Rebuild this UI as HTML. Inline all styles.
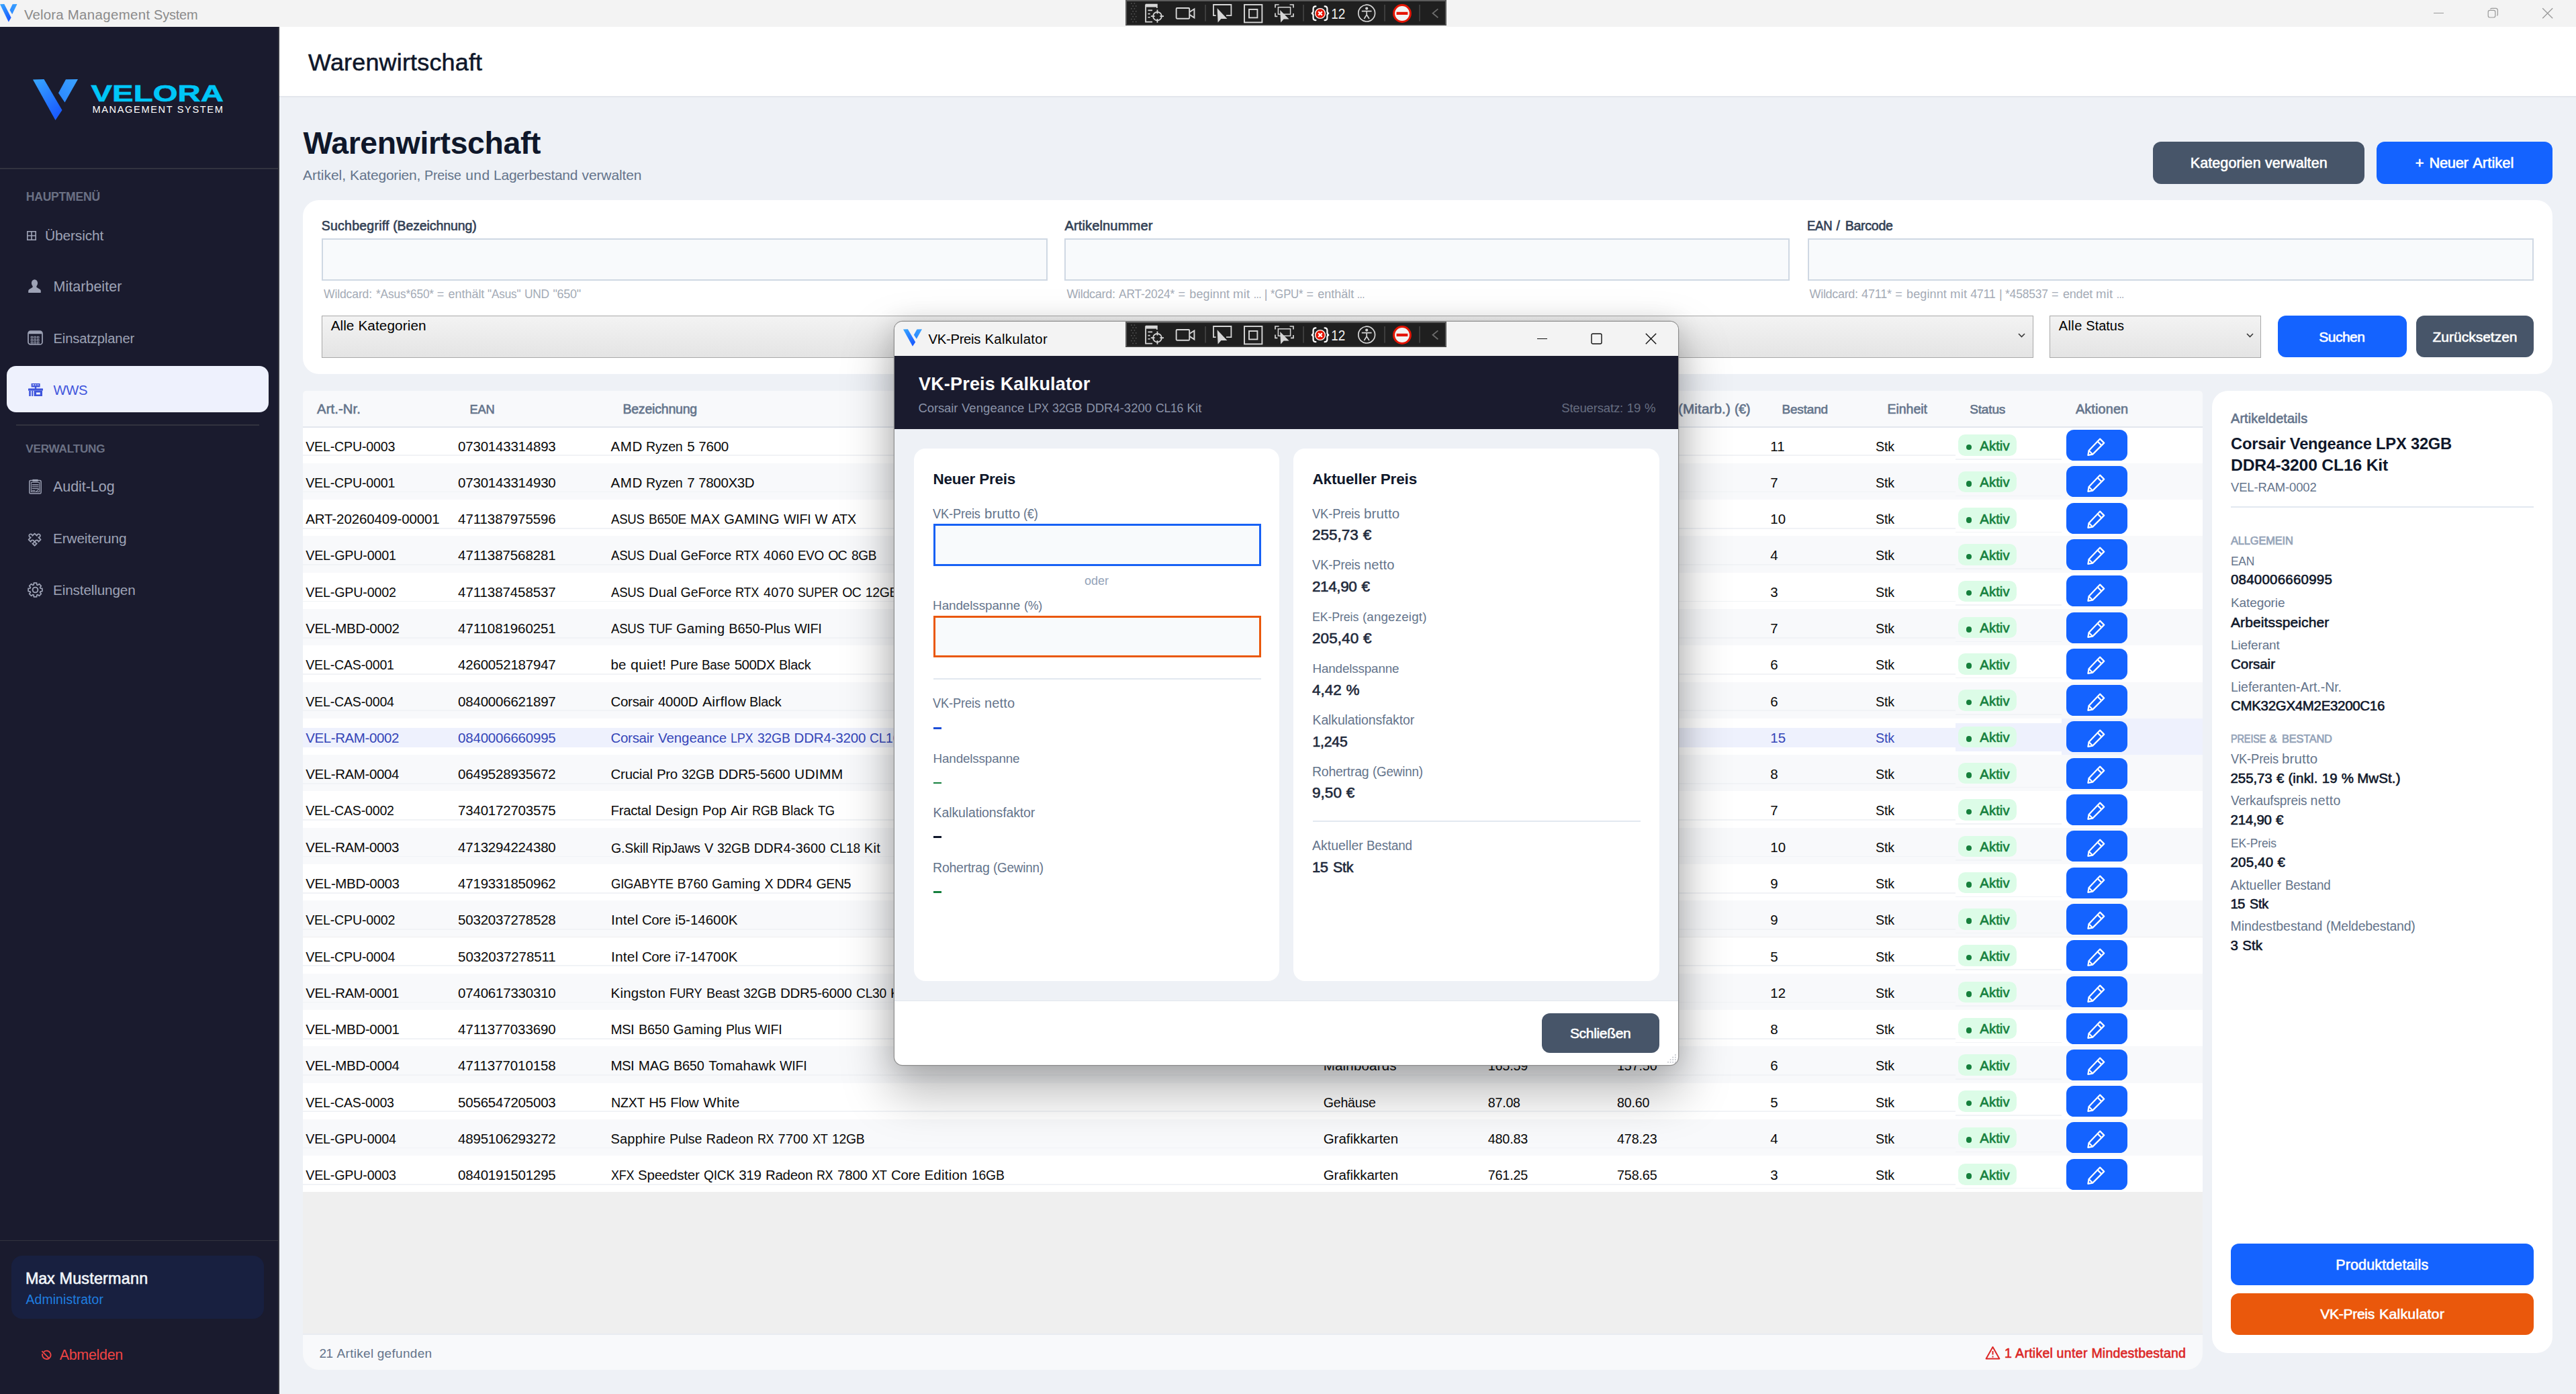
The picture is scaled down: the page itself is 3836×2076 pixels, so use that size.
<!DOCTYPE html><html lang="de"><head><meta charset="utf-8"><title>Velora Management System</title><style>
html,body{margin:0;padding:0}
body{width:3836px;height:2076px;position:relative;overflow:hidden;background:#eef1f6;
font-family:"Liberation Sans",sans-serif;}
.t{position:absolute;white-space:pre;line-height:1;}
.a{position:absolute;}
</style></head><body><svg width="0" height="0" style="position:absolute"><defs>
<linearGradient id="vg" x1="0" y1="0" x2="0.6" y2="1"><stop offset="0" stop-color="#38a8ff"/><stop offset="1" stop-color="#1a5cff"/></linearGradient>
<linearGradient id="vg2" x1="0" y1="1" x2="1" y2="0"><stop offset="0" stop-color="#2a86ff"/><stop offset="1" stop-color="#3aa2ff"/></linearGradient>
<symbol id="vlogo" viewBox="0 0 67 61"><path d="M0 0.5 L16.5 0 L43.5 46 L33.5 61 Z" fill="url(#vg)"/><path d="M49 0.3 L67 0 L47.5 34.5 L38 20.5 Z" fill="url(#vg2)"/></symbol>
<symbol id="pencil" viewBox="0 0 27 27"><g fill="none" stroke="#fff" stroke-width="2.2" stroke-linejoin="round" stroke-linecap="round"><path d="M19.2 1.6 L25.2 7.6 L8.2 24.6 L1.4 25.8 L2.6 19 Z"/><path d="M15.6 5.4 L21.4 11.2"/><path d="M2.8 19.2 L7.8 24.2"/></g></symbol>
</defs></svg><div class="a" style="left:0.0px;top:0.0px;width:3836.0px;height:40.0px;background:#f3f3f3;"></div><svg class="a" style="left:0;top:6px" width="25.6" height="26.8" viewBox="0 0 67 61" preserveAspectRatio="none"><use href="#vlogo" width="67" height="61"/></svg><span class="t" style="left:35.9px;top:12.0px;font-size:20.44px;color:#8a8a8a;letter-spacing:0.165px;">Velora</span><span class="t" style="left:100.7px;top:12.0px;font-size:20.44px;color:#8a8a8a;letter-spacing:0.354px;">Management</span><span class="t" style="left:229.2px;top:12.0px;font-size:20.44px;color:#8a8a8a;letter-spacing:-0.204px;transform:scaleX(0.9789);transform-origin:0 0;">System</span><div class="a" style="left:3624.0px;top:18.8px;width:15.2px;height:1.2px;background:#9a9a9a;"></div><svg class="a" style="left:3704.2px;top:11.4px;" width="17" height="17" viewBox="0 0 17 17"><g fill="none" stroke="#9a9a9a" stroke-width="1.2"><rect x="1.2" y="4.4" width="10.6" height="10.6" rx="2.4"/><path d="M4.6 2.8 a2 2 0 0 1 1.8 -1.4 H12.6 a2.8 2.8 0 0 1 2.8 2.8 V10.4 a2 2 0 0 1 -1.2 1.8"/></g></svg><svg class="a" style="left:3785.0px;top:11.0px;" width="18" height="18" viewBox="0 0 18 18"><path d="M1.2 1.2 L16.2 16.2 M16.2 1.2 L1.2 16.2" stroke="#9a9a9a" stroke-width="1.3" fill="none"/></svg><div class="a" style="left:0.0px;top:40.0px;width:416.0px;height:2036.0px;background:#1a1b2e;"></div><div class="a" style="left:413.6px;top:40.0px;width:2.4px;height:2036.0px;background:#34353f;"></div><svg class="a" style="left:49.0px;top:117.8px;" width="67" height="61" viewBox="0 0 67 61"><use href="#vlogo" width="67" height="61"/></svg><svg class="a" style="left:133px;top:120px" width="204" height="54" viewBox="0 0 204 54"><text x="2.5" y="30.9" font-family="Liberation Sans" font-weight="700" font-size="35.5" fill="#00c6f7" stroke="#00c6f7" stroke-width="0.7" textLength="197.4" lengthAdjust="spacingAndGlyphs">VELORA</text><text x="4.4" y="47.8" font-family="Liberation Sans" font-size="14.6" fill="#ffffff" textLength="194.5" lengthAdjust="spacing">MANAGEMENT SYSTEM</text></svg><div class="a" style="left:0.0px;top:250.2px;width:414.0px;height:2.0px;background:#32333f;"></div><span class="t" style="left:38.7px;top:285.0px;font-size:17.56px;color:#6b7184;font-weight:700;letter-spacing:-0.201px;">HAUPTMENÜ</span><svg class="a" style="left:39.6px;top:344.0px;" width="14" height="14" viewBox="0 0 14 14"><g fill="none" stroke="#9ea3b6" stroke-width="1.6"><rect x="0.8" y="0.8" width="12.4" height="12.4"/><path d="M7 0.8V13.2M0.8 7H13.2"/></g></svg><span class="t" style="left:67.1px;top:341.0px;font-size:20.96px;color:#9ea3b6;letter-spacing:-0.162px;">Übersicht</span><svg class="a" style="left:42.2px;top:416.4px;" width="19" height="20" viewBox="0 0 19 20"><g fill="#9ea3b6"><ellipse cx="9.5" cy="5.6" rx="4.6" ry="5.4"/><path d="M6.6 9.5 h5.8 v2.2 l5.2 3.2 q1.2 0.8 1.2 2.4 V20 H0.2 v-2.7 q0 -1.6 1.2 -2.4 l5.2 -3.2 Z"/></g></svg><span class="t" style="left:79.5px;top:417.0px;font-size:21.5px;color:#9ea3b6;letter-spacing:0.024px;">Mitarbeiter</span><svg class="a" style="left:41.0px;top:492.4px;" width="23" height="22" viewBox="0 0 23 22"><rect x="1" y="1" width="21" height="20" rx="3.6" fill="none" stroke="#9ea3b6" stroke-width="1.7"/><path d="M1.4 5.2 a3.6 3.6 0 0 1 3.4 -4 h13.4 a3.6 3.6 0 0 1 3.4 4 Z" fill="#9ea3b6"/><rect x="5.2" y="9.2" width="2.6" height="2.4" fill="none" stroke="#9ea3b6" stroke-width="0.9"/><rect x="9.8" y="9.2" width="2.6" height="2.4" fill="none" stroke="#9ea3b6" stroke-width="0.9"/><rect x="14.4" y="9.2" width="2.6" height="2.4" fill="none" stroke="#9ea3b6" stroke-width="0.9"/><rect x="5.2" y="13.4" width="2.6" height="2.4" fill="none" stroke="#9ea3b6" stroke-width="0.9"/><rect x="9.8" y="13.4" width="2.6" height="2.4" fill="none" stroke="#9ea3b6" stroke-width="0.9"/><rect x="14.4" y="13.4" width="2.6" height="2.4" fill="none" stroke="#9ea3b6" stroke-width="0.9"/><rect x="5.2" y="17.6" width="2.6" height="2.4" fill="none" stroke="#9ea3b6" stroke-width="0.9"/><rect x="9.8" y="17.6" width="2.6" height="2.4" fill="none" stroke="#9ea3b6" stroke-width="0.9"/><rect x="14.4" y="17.6" width="2.6" height="2.4" fill="none" stroke="#9ea3b6" stroke-width="0.9"/></svg><span class="t" style="left:79.5px;top:494.0px;font-size:20.22px;color:#9ea3b6;letter-spacing:-0.143px;">Einsatzplaner</span><div class="a" style="left:10.0px;top:544.6px;width:390.2px;height:69.7px;background:#eef1fd;border-radius:14px;"></div><svg class="a" style="left:42.0px;top:571.0px;" width="22" height="19" viewBox="0 0 22 19"><g fill="#3f55dc"><rect x="4.6" y="0" width="13" height="5.6" rx="0.6"/><rect x="9.8" y="5" width="2.4" height="3.4"/><rect x="0" y="7.6" width="22" height="3.2" rx="0.6"/><rect x="1.2" y="11" width="2.6" height="8"/><rect x="5.2" y="11" width="2" height="8"/><path d="M8.6 11 H21 V19 H8.6 Z M12 13.4 V16.4 H17.8 V13.4 Z" fill-rule="evenodd"/></g><g fill="#eef1fd"><rect x="6.4" y="1.5" width="2.6" height="1.4"/><rect x="10.2" y="1.5" width="2" height="1.4"/><rect x="13.6" y="1.5" width="2" height="1.4"/></g></svg><span class="t" style="left:79.5px;top:571.0px;font-size:20.26px;color:#3f55dc;letter-spacing:-0.367px;">WWS</span><div class="a" style="left:24.0px;top:632.0px;width:361.6px;height:1.8px;background:#32333f;"></div><span class="t" style="left:38.3px;top:660.0px;font-size:17.21px;color:#6b7184;font-weight:700;letter-spacing:-0.260px;">VERWALTUNG</span><svg class="a" style="left:43.0px;top:713.2px;" width="19" height="23" viewBox="0 0 19 23"><g fill="none" stroke="#9ea3b6" stroke-width="1.5"><rect x="0.9" y="2.6" width="17.2" height="19.4" rx="1.6"/><rect x="3.4" y="5.4" width="12.2" height="14" stroke-width="1"/><path d="M5.4 0.9 h8.2 v3.4 h-8.2 Z" fill="#9ea3b6" stroke="none"/><path d="M4.6 9 h9.8 M4.6 11.8 h9.8 M4.6 14.6 h9.8" stroke-width="1.3"/><path d="M11 19 l3.8 -3.6 M4.4 17.6 h5" stroke-width="1.1"/></g></svg><span class="t" style="left:79.0px;top:715.0px;font-size:21.5px;color:#9ea3b6;letter-spacing:-0.056px;">Audit-Log</span><svg class="a" style="left:40.8px;top:790.6px;" width="24" height="24" viewBox="0 0 24 24"><g transform="translate(10.6 12.6) rotate(-45)"><path d="M-6.4 -6.4 H-1.7 A2.5 2.5 0 1 1 1.7 -6.4 H6.4 V-1.7 A2.5 2.5 0 1 1 6.4 1.7 V6.4 H1.7 A2.5 2.5 0 1 0 -1.7 6.4 H-6.4 V1.7 A2.5 2.5 0 1 0 -6.4 -1.7 Z" fill="none" stroke="#9ea3b6" stroke-width="1.7" stroke-linejoin="round"/></g></svg><span class="t" style="left:79.0px;top:792.0px;font-size:20.83px;color:#9ea3b6;letter-spacing:-0.164px;">Erweiterung</span><svg class="a" style="left:40.8px;top:867.0px;" width="23" height="23" viewBox="0 0 23 23"><path d="M9.14 3.86 L9.39 1.11 L13.61 1.11 L13.86 3.86 L15.23 4.42 L17.36 2.66 L20.34 5.64 L18.58 7.77 L19.14 9.14 L21.89 9.39 L21.89 13.61 L19.14 13.86 L18.58 15.23 L20.34 17.36 L17.36 20.34 L15.23 18.58 L13.86 19.14 L13.61 21.89 L9.39 21.89 L9.14 19.14 L7.77 18.58 L5.64 20.34 L2.66 17.36 L4.42 15.23 L3.86 13.86 L1.11 13.61 L1.11 9.39 L3.86 9.14 L4.42 7.77 L2.66 5.64 L5.64 2.66 L7.77 4.42 Z" fill="none" stroke="#9ea3b6" stroke-width="1.7" stroke-linejoin="round"/><circle cx="11.5" cy="11.5" r="3.9" fill="none" stroke="#9ea3b6" stroke-width="1.9"/></svg><span class="t" style="left:79.0px;top:869.0px;font-size:20.76px;color:#9ea3b6;letter-spacing:-0.149px;">Einstellungen</span><div class="a" style="left:0.0px;top:1846.6px;width:414.0px;height:1.8px;background:#32333f;"></div><div class="a" style="left:17.4px;top:1869.6px;width:375.6px;height:94.6px;background:#182040;border-radius:16px;"></div><span class="t" style="left:38.1px;top:1893.0px;font-size:23.38px;color:#f1f5f9;letter-spacing:-0.243px;-webkit-text-stroke:0.62px #f1f5f9;">Max</span><span class="t" style="left:88.5px;top:1893.0px;font-size:23.38px;color:#f1f5f9;letter-spacing:0.193px;-webkit-text-stroke:0.62px #f1f5f9;">Mustermann</span><span class="t" style="left:38.6px;top:1926.0px;font-size:19.38px;color:#1f7fe0;letter-spacing:0.104px;">Administrator</span><svg class="a" style="left:60.5px;top:2009.5px;" width="16" height="16" viewBox="0 0 16 16"><g fill="none" stroke="#ef4444" stroke-width="1.9"><path d="M4.2 3.2 A6.2 6.2 0 1 1 2.4 6"/><path d="M1.4 2.2 L11.6 12.4"/></g></svg><span class="t" style="left:88.7px;top:2008.0px;font-size:21.5px;color:#ef4444;letter-spacing:-0.318px;">Abmelden</span><div class="a" style="left:416.0px;top:40.0px;width:3420.0px;height:102.8px;background:#ffffff;"></div><div class="a" style="left:416.0px;top:142.6px;width:3420.0px;height:2.0px;background:#e3e6ec;"></div><span class="t" style="left:459.1px;top:75.0px;font-size:35.96px;color:#0f172a;letter-spacing:0.185px;-webkit-text-stroke:0.55px #0f172a;">Warenwirtschaft</span><span class="t" style="left:451.6px;top:190.0px;font-size:46.39px;color:#0f172a;font-weight:700;letter-spacing:-0.375px;">Warenwirtschaft</span><span class="t" style="left:451.1px;top:250.0px;font-size:21px;color:#64748b;letter-spacing:-0.041px;">Artikel,</span><span class="t" style="left:521.1px;top:250.0px;font-size:21px;color:#64748b;letter-spacing:-0.216px;">Kategorien,</span><span class="t" style="left:632.4px;top:250.0px;font-size:21px;color:#64748b;letter-spacing:-0.179px;transform:scaleX(0.9347);transform-origin:0 0;">Preise</span><span class="t" style="left:693.3px;top:250.0px;font-size:21px;color:#64748b;letter-spacing:0.393px;">und</span><span class="t" style="left:735.1px;top:250.0px;font-size:21px;color:#64748b;letter-spacing:-0.283px;">Lagerbestand</span><span class="t" style="left:866.5px;top:250.0px;font-size:21px;color:#64748b;letter-spacing:-0.104px;">verwalten</span><div class="a" style="left:3206.4px;top:211.0px;width:314.4px;height:62.6px;background:#475569;border-radius:12px;"></div><span class="t" style="left:3261.7px;top:233.0px;font-size:21.53px;color:#ffffff;letter-spacing:0.093px;-webkit-text-stroke:0.62px #ffffff;">Kategorien</span><span class="t" style="left:3372.9px;top:233.0px;font-size:21.53px;color:#ffffff;letter-spacing:0.086px;-webkit-text-stroke:0.62px #ffffff;">verwalten</span><div class="a" style="left:3538.9px;top:211.0px;width:262.1px;height:62.6px;background:#1463ff;border-radius:12px;"></div><span class="t" style="left:3596.7px;top:232.0px;font-size:21.92px;color:#ffffff;-webkit-text-stroke:0.62px #ffffff;">+</span><span class="t" style="left:3617.4px;top:232.0px;font-size:21.92px;color:#ffffff;letter-spacing:-0.300px;-webkit-text-stroke:0.62px #ffffff;">Neuer</span><span class="t" style="left:3682.2px;top:232.0px;font-size:21.92px;color:#ffffff;letter-spacing:0.068px;-webkit-text-stroke:0.62px #ffffff;">Artikel</span><div class="a" style="left:451.0px;top:298.3px;width:3349.8px;height:258.6px;background:#ffffff;border-radius:24px;"></div><span class="t" style="left:478.8px;top:327.0px;font-size:19.5px;color:#334155;letter-spacing:0.234px;-webkit-text-stroke:0.62px #334155;">Suchbegriff</span><span class="t" style="left:585.2px;top:327.0px;font-size:19.5px;color:#334155;letter-spacing:-0.107px;-webkit-text-stroke:0.62px #334155;">(Bezeichnung)</span><span class="t" style="left:1585.4px;top:326.0px;font-size:20.12px;color:#334155;letter-spacing:0.115px;-webkit-text-stroke:0.62px #334155;">Artikelnummer</span><span class="t" style="left:2691.1px;top:327.0px;font-size:19.5px;color:#334155;letter-spacing:-0.301px;-webkit-text-stroke:0.62px #334155;transform:scaleX(0.9505);transform-origin:0 0;">EAN</span><span class="t" style="left:2734.4px;top:327.0px;font-size:19.5px;color:#334155;-webkit-text-stroke:0.62px #334155;">/</span><span class="t" style="left:2747.7px;top:327.0px;font-size:19.5px;color:#334155;letter-spacing:-0.232px;-webkit-text-stroke:0.62px #334155;">Barcode</span><div class="a" style="left:479.3px;top:355.2px;width:1081.0px;height:62.8px;background:#f8fafc;border:2px solid #cfd8e3;box-sizing:border-box;"></div><div class="a" style="left:1585.4px;top:355.2px;width:1080.1px;height:62.8px;background:#f8fafc;border:2px solid #cfd8e3;box-sizing:border-box;"></div><div class="a" style="left:2691.6px;top:355.2px;width:1081.4px;height:62.8px;background:#f8fafc;border:2px solid #cfd8e3;box-sizing:border-box;"></div><span class="t" style="left:482.4px;top:429.0px;font-size:18px;color:#a4abb6;letter-spacing:-0.141px;transform:scaleX(0.9760);transform-origin:0 0;">Wildcard:</span><span class="t" style="left:559.6px;top:429.0px;font-size:18px;color:#a4abb6;letter-spacing:-0.152px;transform:scaleX(0.9596);transform-origin:0 0;">*Asus*650*</span><span class="t" style="left:650.8px;top:429.0px;font-size:18px;color:#a4abb6;">=</span><span class="t" style="left:667.6px;top:429.0px;font-size:18px;color:#a4abb6;letter-spacing:-0.052px;">enthält</span><span class="t" style="left:726.4px;top:429.0px;font-size:18px;color:#a4abb6;letter-spacing:-0.158px;transform:scaleX(0.9531);transform-origin:0 0;">"Asus"</span><span class="t" style="left:781.1px;top:429.0px;font-size:18px;color:#a4abb6;letter-spacing:-0.293px;transform:scaleX(0.9673);transform-origin:0 0;">UND</span><span class="t" style="left:823.4px;top:429.0px;font-size:18px;color:#a4abb6;letter-spacing:-0.247px;">"650"</span><span class="t" style="left:1588.4px;top:429.0px;font-size:18px;color:#a4abb6;letter-spacing:-0.316px;">Wildcard:</span><span class="t" style="left:1666.0px;top:429.0px;font-size:18px;color:#a4abb6;letter-spacing:-0.165px;transform:scaleX(0.9634);transform-origin:0 0;">ART-2024*</span><span class="t" style="left:1754.4px;top:429.0px;font-size:18px;color:#a4abb6;">=</span><span class="t" style="left:1771.3px;top:429.0px;font-size:18px;color:#a4abb6;letter-spacing:0.123px;">beginnt</span><span class="t" style="left:1836.2px;top:429.0px;font-size:18px;color:#a4abb6;letter-spacing:0.180px;transform:scaleX(1.0313);transform-origin:0 0;">mit</span><span class="t" style="left:1866.5px;top:429.0px;font-size:18px;color:#a4abb6;letter-spacing:-0.113px;transform:scaleX(0.7547);transform-origin:0 0;">...</span><span class="t" style="left:1882.8px;top:429.0px;font-size:18px;color:#a4abb6;">|</span><span class="t" style="left:1891.8px;top:429.0px;font-size:18px;color:#a4abb6;letter-spacing:-0.199px;transform:scaleX(0.9285);transform-origin:0 0;">*GPU*</span><span class="t" style="left:1945.4px;top:429.0px;font-size:18px;color:#a4abb6;">=</span><span class="t" style="left:1962.3px;top:429.0px;font-size:18px;color:#a4abb6;letter-spacing:-0.006px;">enthält</span><span class="t" style="left:2021.4px;top:429.0px;font-size:18px;color:#a4abb6;letter-spacing:-0.113px;transform:scaleX(0.7547);transform-origin:0 0;">...</span><span class="t" style="left:2694.6px;top:429.0px;font-size:18px;color:#a4abb6;letter-spacing:-0.327px;">Wildcard:</span><span class="t" style="left:2772.1px;top:429.0px;font-size:18px;color:#a4abb6;letter-spacing:-0.180px;">4711*</span><span class="t" style="left:2822.2px;top:429.0px;font-size:18px;color:#a4abb6;">=</span><span class="t" style="left:2839.1px;top:429.0px;font-size:18px;color:#a4abb6;letter-spacing:0.111px;">beginnt</span><span class="t" style="left:2904.0px;top:429.0px;font-size:18px;color:#a4abb6;letter-spacing:0.180px;transform:scaleX(1.0300);transform-origin:0 0;">mit</span><span class="t" style="left:2934.2px;top:429.0px;font-size:18px;color:#a4abb6;letter-spacing:-0.354px;">4711</span><span class="t" style="left:2976.9px;top:429.0px;font-size:18px;color:#a4abb6;">|</span><span class="t" style="left:2986.0px;top:429.0px;font-size:18px;color:#a4abb6;letter-spacing:-0.168px;transform:scaleX(0.9683);transform-origin:0 0;">*458537</span><span class="t" style="left:3055.1px;top:429.0px;font-size:18px;color:#a4abb6;">=</span><span class="t" style="left:3071.9px;top:429.0px;font-size:18px;color:#a4abb6;letter-spacing:-0.167px;">endet</span><span class="t" style="left:3121.4px;top:429.0px;font-size:18px;color:#a4abb6;letter-spacing:0.180px;transform:scaleX(1.0300);transform-origin:0 0;">mit</span><span class="t" style="left:3151.7px;top:429.0px;font-size:18px;color:#a4abb6;letter-spacing:-0.113px;transform:scaleX(0.7538);transform-origin:0 0;">...</span><div class="a" style="left:479.3px;top:470.2px;width:2548.3px;height:62.6px;border:1.6px solid #a8a8a8;box-sizing:border-box;background:linear-gradient(#f3f3f3,#e4e4e4);"></div><div class="a" style="left:3052.2px;top:470.2px;width:314.9px;height:62.6px;border:1.6px solid #a8a8a8;box-sizing:border-box;background:linear-gradient(#f3f3f3,#e4e4e4);"></div><span class="t" style="left:492.7px;top:475.0px;font-size:20.76px;color:#000;">Alle</span><span class="t" style="left:533.4px;top:475.0px;font-size:20.76px;color:#000;letter-spacing:0.091px;">Kategorien</span><span class="t" style="left:3065.8px;top:475.0px;font-size:20px;color:#000;letter-spacing:0.372px;">Alle</span><span class="t" style="left:3106.3px;top:475.0px;font-size:20px;color:#000;letter-spacing:-0.008px;">Status</span><svg class="a" style="left:3005.0px;top:496.2px;" width="11" height="7" viewBox="0 0 11 7"><path d="M1 1 L5.5 5.6 L10 1" fill="none" stroke="#3a3a3a" stroke-width="1.6"/></svg><svg class="a" style="left:3344.5px;top:496.2px;" width="11" height="7" viewBox="0 0 11 7"><path d="M1 1 L5.5 5.6 L10 1" fill="none" stroke="#3a3a3a" stroke-width="1.6"/></svg><div class="a" style="left:3391.7px;top:470.1px;width:191.9px;height:62.3px;background:#1463ff;border-radius:12px;"></div><span class="t" style="left:3453.2px;top:491.0px;font-size:21px;color:#ffffff;letter-spacing:-0.487px;-webkit-text-stroke:0.62px #ffffff;">Suchen</span><div class="a" style="left:3598.2px;top:470.1px;width:174.8px;height:62.3px;background:#475569;border-radius:12px;"></div><span class="t" style="left:3622.5px;top:491.0px;font-size:21px;color:#ffffff;-webkit-text-stroke:0.62px #ffffff;">Zurücksetzen</span><div class="a" style="left:451.2px;top:581.8px;width:2828.4px;height:1458.4px;background:#efefef;border-radius:5px 5px 24px 24px;"></div><div class="a" style="left:451.2px;top:581.8px;width:2828.4px;height:54.0px;background:#f8f9fb;border-radius:5px 5px 0 0;"></div><div class="a" style="left:451.2px;top:635.0px;width:2828.4px;height:2.2px;background:#e3e7ee;"></div><span class="t" style="left:472.1px;top:599.0px;font-size:20.23px;color:#64748b;letter-spacing:0.096px;-webkit-text-stroke:0.62px #64748b;">Art.-Nr.</span><span class="t" style="left:699.6px;top:601.0px;font-size:18.26px;color:#64748b;letter-spacing:-0.266px;-webkit-text-stroke:0.62px #64748b;">EAN</span><span class="t" style="left:927.4px;top:600.0px;font-size:19.5px;color:#64748b;letter-spacing:-0.197px;-webkit-text-stroke:0.62px #64748b;">Bezeichnung</span><span class="t" style="left:1987.6px;top:600.0px;font-size:19.89px;color:#64748b;letter-spacing:0.113px;-webkit-text-stroke:0.62px #64748b;">Kategorie</span><span class="t" style="left:2232.1px;top:599.0px;font-size:20.08px;color:#64748b;letter-spacing:-0.402px;-webkit-text-stroke:0.62px #64748b;transform:scaleX(0.9340);transform-origin:0 0;">EK</span><span class="t" style="left:2263.3px;top:599.0px;font-size:20.08px;color:#64748b;letter-spacing:0.184px;-webkit-text-stroke:0.62px #64748b;transform:scaleX(1.0417);transform-origin:0 0;">(€)</span><span class="t" style="left:2468.5px;top:599.0px;font-size:20.06px;color:#64748b;letter-spacing:-0.401px;-webkit-text-stroke:0.62px #64748b;transform:scaleX(0.9401);transform-origin:0 0;">VK</span><span class="t" style="left:2499.3px;top:599.0px;font-size:20.06px;color:#64748b;letter-spacing:0.140px;-webkit-text-stroke:0.62px #64748b;transform:scaleX(1.0278);transform-origin:0 0;">(Mitarb.)</span><span class="t" style="left:2583.2px;top:599.0px;font-size:20.06px;color:#64748b;letter-spacing:-0.184px;-webkit-text-stroke:0.62px #64748b;transform:scaleX(0.9751);transform-origin:0 0;">(€)</span><span class="t" style="left:2653.4px;top:600.0px;font-size:19.03px;color:#64748b;letter-spacing:-0.164px;-webkit-text-stroke:0.62px #64748b;">Bestand</span><span class="t" style="left:2810.6px;top:600.0px;font-size:19.5px;color:#64748b;letter-spacing:-0.054px;-webkit-text-stroke:0.62px #64748b;">Einheit</span><span class="t" style="left:2933.2px;top:600.0px;font-size:19.05px;color:#64748b;letter-spacing:-0.151px;-webkit-text-stroke:0.62px #64748b;">Status</span><span class="t" style="left:3090.9px;top:600.0px;font-size:19.92px;color:#64748b;letter-spacing:0.119px;-webkit-text-stroke:0.62px #64748b;">Aktionen</span><div class="a" style="left:451.2px;top:637.2px;width:2828.4px;height:52.7px;background:#ffffff;"></div><div class="a" style="left:451.2px;top:677.4px;width:2460.8px;height:1.8px;background:#f1f3f6;"></div><div class="a" style="left:2912.0px;top:683.2px;width:158.0px;height:1.6px;background:#f1f3f6;"></div><span class="t" style="left:455.2px;top:656.0px;font-size:19.64px;color:#0a0a0a;letter-spacing:-0.178px;">VEL-CPU-0003</span><span class="t" style="left:682.1px;top:655.0px;font-size:20.5px;color:#0a0a0a;letter-spacing:-0.213px;">0730143314893</span><span class="t" style="left:909.5px;top:655.0px;font-size:20.5px;color:#0a0a0a;letter-spacing:0.632px;">AMD</span><span class="t" style="left:962.4px;top:655.0px;font-size:20.5px;color:#0a0a0a;letter-spacing:-0.218px;transform:scaleX(0.9566);transform-origin:0 0;">Ryzen</span><span class="t" style="left:1023.2px;top:655.0px;font-size:20.5px;color:#0a0a0a;">5</span><span class="t" style="left:1040.3px;top:655.0px;font-size:20.5px;color:#0a0a0a;letter-spacing:-0.209px;">7600</span><span class="t" style="left:2636.3px;top:655.0px;font-size:20.5px;color:#0a0a0a;">11</span><span class="t" style="left:2793.0px;top:656.0px;font-size:19.67px;color:#0a0a0a;letter-spacing:-0.203px;">Stk</span><div class="a" style="left:2916.1px;top:647.4px;width:86.6px;height:31.5px;background:#dcfce7;border-radius:10.5px;"></div><div class="a" style="left:2927.6px;top:661.7px;width:8.7px;height:8.7px;background:#16803c;border-radius:4.4px;"></div><span class="t" style="left:2948.3px;top:654.0px;font-size:20.24px;color:#15803d;letter-spacing:0.110px;-webkit-text-stroke:0.62px #15803d;">Aktiv</span><div class="a" style="left:3077.0px;top:640.1px;width:91.1px;height:46.0px;background:#1463ff;border-radius:11.5px;"></div><svg class="a" style="left:3108.2px;top:651.6px;" width="27" height="27" viewBox="0 0 27 27"><use href="#pencil" width="27" height="27"/></svg><div class="a" style="left:451.2px;top:689.9px;width:2828.4px;height:54.3px;background:#f8f9fb;"></div><div class="a" style="left:451.2px;top:731.7px;width:2460.8px;height:1.8px;background:#f1f3f6;"></div><div class="a" style="left:2912.0px;top:737.5px;width:158.0px;height:1.6px;background:#f1f3f6;"></div><span class="t" style="left:455.2px;top:710.0px;font-size:19.64px;color:#0a0a0a;letter-spacing:-0.178px;">VEL-CPU-0001</span><span class="t" style="left:682.1px;top:709.0px;font-size:20.5px;color:#0a0a0a;letter-spacing:-0.213px;">0730143314930</span><span class="t" style="left:909.5px;top:709.0px;font-size:20.5px;color:#0a0a0a;letter-spacing:0.632px;">AMD</span><span class="t" style="left:962.4px;top:709.0px;font-size:20.5px;color:#0a0a0a;letter-spacing:-0.218px;transform:scaleX(0.9566);transform-origin:0 0;">Ryzen</span><span class="t" style="left:1023.2px;top:709.0px;font-size:20.5px;color:#0a0a0a;">7</span><span class="t" style="left:1040.3px;top:709.0px;font-size:20.5px;color:#0a0a0a;letter-spacing:-0.371px;">7800X3D</span><span class="t" style="left:2636.3px;top:709.0px;font-size:20.5px;color:#0a0a0a;">7</span><span class="t" style="left:2793.0px;top:710.0px;font-size:19.67px;color:#0a0a0a;letter-spacing:-0.203px;">Stk</span><div class="a" style="left:2916.1px;top:701.7px;width:86.6px;height:31.5px;background:#dcfce7;border-radius:10.5px;"></div><div class="a" style="left:2927.6px;top:716.0px;width:8.7px;height:8.7px;background:#16803c;border-radius:4.4px;"></div><span class="t" style="left:2948.3px;top:708.0px;font-size:20.24px;color:#15803d;letter-spacing:0.110px;-webkit-text-stroke:0.62px #15803d;">Aktiv</span><div class="a" style="left:3077.0px;top:694.4px;width:91.1px;height:46.0px;background:#1463ff;border-radius:11.5px;"></div><svg class="a" style="left:3108.2px;top:705.9px;" width="27" height="27" viewBox="0 0 27 27"><use href="#pencil" width="27" height="27"/></svg><div class="a" style="left:451.2px;top:744.2px;width:2828.4px;height:54.3px;background:#ffffff;"></div><div class="a" style="left:451.2px;top:786.0px;width:2460.8px;height:1.8px;background:#f1f3f6;"></div><div class="a" style="left:2912.0px;top:791.8px;width:158.0px;height:1.6px;background:#f1f3f6;"></div><span class="t" style="left:455.2px;top:763.0px;font-size:20.5px;color:#0a0a0a;letter-spacing:-0.106px;">ART-20260409-00001</span><span class="t" style="left:682.1px;top:763.0px;font-size:20.5px;color:#0a0a0a;letter-spacing:-0.087px;">4711387975596</span><span class="t" style="left:909.5px;top:763.0px;font-size:20.04px;color:#0a0a0a;letter-spacing:-0.273px;transform:scaleX(0.9297);transform-origin:0 0;">ASUS</span><span class="t" style="left:965.5px;top:763.0px;font-size:20.04px;color:#0a0a0a;letter-spacing:-0.226px;transform:scaleX(0.9505);transform-origin:0 0;">B650E</span><span class="t" style="left:1027.9px;top:763.0px;font-size:20.04px;color:#0a0a0a;letter-spacing:0.457px;">MAX</span><span class="t" style="left:1078.3px;top:763.0px;font-size:20.04px;color:#0a0a0a;letter-spacing:0.201px;">GAMING</span><span class="t" style="left:1166.6px;top:763.0px;font-size:20.04px;color:#0a0a0a;letter-spacing:-0.211px;transform:scaleX(0.9776);transform-origin:0 0;">WIFI</span><span class="t" style="left:1213.4px;top:763.0px;font-size:20.04px;color:#0a0a0a;">W</span><span class="t" style="left:1238.7px;top:763.0px;font-size:20.04px;color:#0a0a0a;letter-spacing:-0.502px;">ATX</span><span class="t" style="left:2636.3px;top:763.0px;font-size:20.5px;color:#0a0a0a;">10</span><span class="t" style="left:2793.0px;top:764.0px;font-size:19.67px;color:#0a0a0a;letter-spacing:-0.203px;">Stk</span><div class="a" style="left:2916.1px;top:756.0px;width:86.6px;height:31.5px;background:#dcfce7;border-radius:10.5px;"></div><div class="a" style="left:2927.6px;top:770.3px;width:8.7px;height:8.7px;background:#16803c;border-radius:4.4px;"></div><span class="t" style="left:2948.3px;top:763.0px;font-size:20.24px;color:#15803d;letter-spacing:0.110px;-webkit-text-stroke:0.62px #15803d;">Aktiv</span><div class="a" style="left:3077.0px;top:748.7px;width:91.1px;height:46.0px;background:#1463ff;border-radius:11.5px;"></div><svg class="a" style="left:3108.2px;top:760.2px;" width="27" height="27" viewBox="0 0 27 27"><use href="#pencil" width="27" height="27"/></svg><div class="a" style="left:451.2px;top:798.4px;width:2828.4px;height:54.3px;background:#f8f9fb;"></div><div class="a" style="left:451.2px;top:840.2px;width:2460.8px;height:1.8px;background:#f1f3f6;"></div><div class="a" style="left:2912.0px;top:846.0px;width:158.0px;height:1.6px;background:#f1f3f6;"></div><span class="t" style="left:455.2px;top:818.0px;font-size:19.69px;color:#0a0a0a;letter-spacing:-0.188px;">VEL-GPU-0001</span><span class="t" style="left:682.1px;top:817.0px;font-size:20.5px;color:#0a0a0a;letter-spacing:-0.087px;">4711387568281</span><span class="t" style="left:909.5px;top:818.0px;font-size:19.67px;color:#0a0a0a;letter-spacing:-0.268px;transform:scaleX(0.9476);transform-origin:0 0;">ASUS</span><span class="t" style="left:965.5px;top:818.0px;font-size:19.67px;color:#0a0a0a;letter-spacing:0.202px;transform:scaleX(1.0247);transform-origin:0 0;">Dual</span><span class="t" style="left:1013.6px;top:818.0px;font-size:19.67px;color:#0a0a0a;letter-spacing:-0.136px;">GeForce</span><span class="t" style="left:1095.3px;top:818.0px;font-size:19.67px;color:#0a0a0a;letter-spacing:-0.292px;transform:scaleX(0.9250);transform-origin:0 0;">RTX</span><span class="t" style="left:1136.9px;top:818.0px;font-size:19.67px;color:#0a0a0a;letter-spacing:0.416px;">4060</span><span class="t" style="left:1187.9px;top:818.0px;font-size:19.67px;color:#0a0a0a;letter-spacing:-0.311px;transform:scaleX(0.9586);transform-origin:0 0;">EVO</span><span class="t" style="left:1233.2px;top:818.0px;font-size:19.67px;color:#0a0a0a;letter-spacing:-0.950px;">OC</span><span class="t" style="left:1267.8px;top:818.0px;font-size:19.67px;color:#0a0a0a;letter-spacing:-0.295px;transform:scaleX(0.9673);transform-origin:0 0;">8GB</span><span class="t" style="left:2636.3px;top:817.0px;font-size:20.5px;color:#0a0a0a;">4</span><span class="t" style="left:2793.0px;top:818.0px;font-size:19.67px;color:#0a0a0a;letter-spacing:-0.203px;">Stk</span><div class="a" style="left:2916.1px;top:810.2px;width:86.6px;height:31.5px;background:#dcfce7;border-radius:10.5px;"></div><div class="a" style="left:2927.6px;top:824.5px;width:8.7px;height:8.7px;background:#16803c;border-radius:4.4px;"></div><span class="t" style="left:2948.3px;top:817.0px;font-size:20.24px;color:#15803d;letter-spacing:0.110px;-webkit-text-stroke:0.62px #15803d;">Aktiv</span><div class="a" style="left:3077.0px;top:802.9px;width:91.1px;height:46.0px;background:#1463ff;border-radius:11.5px;"></div><svg class="a" style="left:3108.2px;top:814.4px;" width="27" height="27" viewBox="0 0 27 27"><use href="#pencil" width="27" height="27"/></svg><div class="a" style="left:451.2px;top:852.7px;width:2828.4px;height:54.3px;background:#ffffff;"></div><div class="a" style="left:451.2px;top:894.5px;width:2460.8px;height:1.8px;background:#f1f3f6;"></div><div class="a" style="left:2912.0px;top:900.3px;width:158.0px;height:1.6px;background:#f1f3f6;"></div><span class="t" style="left:455.2px;top:873.0px;font-size:19.69px;color:#0a0a0a;letter-spacing:-0.188px;">VEL-GPU-0002</span><span class="t" style="left:682.1px;top:872.0px;font-size:20.5px;color:#0a0a0a;letter-spacing:-0.087px;">4711387458537</span><span class="t" style="left:909.5px;top:873.0px;font-size:19.48px;color:#0a0a0a;letter-spacing:-0.265px;transform:scaleX(0.9565);transform-origin:0 0;">ASUS</span><span class="t" style="left:965.5px;top:873.0px;font-size:19.48px;color:#0a0a0a;letter-spacing:0.200px;transform:scaleX(1.0347);transform-origin:0 0;">Dual</span><span class="t" style="left:1013.6px;top:873.0px;font-size:19.48px;color:#0a0a0a;letter-spacing:-0.017px;">GeForce</span><span class="t" style="left:1095.3px;top:873.0px;font-size:19.48px;color:#0a0a0a;letter-spacing:-0.289px;transform:scaleX(0.9340);transform-origin:0 0;">RTX</span><span class="t" style="left:1136.9px;top:873.0px;font-size:19.48px;color:#0a0a0a;letter-spacing:0.217px;transform:scaleX(1.0232);transform-origin:0 0;">4070</span><span class="t" style="left:1187.9px;top:873.0px;font-size:19.48px;color:#0a0a0a;letter-spacing:-0.252px;transform:scaleX(0.9116);transform-origin:0 0;">SUPER</span><span class="t" style="left:1254.2px;top:873.0px;font-size:19.48px;color:#0a0a0a;letter-spacing:-0.669px;">OC</span><span class="t" style="left:1288.8px;top:873.0px;font-size:19.48px;color:#0a0a0a;letter-spacing:-0.330px;">12GB</span><span class="t" style="left:2636.3px;top:872.0px;font-size:20.5px;color:#0a0a0a;">3</span><span class="t" style="left:2793.0px;top:873.0px;font-size:19.67px;color:#0a0a0a;letter-spacing:-0.203px;">Stk</span><div class="a" style="left:2916.1px;top:864.5px;width:86.6px;height:31.5px;background:#dcfce7;border-radius:10.5px;"></div><div class="a" style="left:2927.6px;top:878.8px;width:8.7px;height:8.7px;background:#16803c;border-radius:4.4px;"></div><span class="t" style="left:2948.3px;top:871.0px;font-size:20.24px;color:#15803d;letter-spacing:0.110px;-webkit-text-stroke:0.62px #15803d;">Aktiv</span><div class="a" style="left:3077.0px;top:857.2px;width:91.1px;height:46.0px;background:#1463ff;border-radius:11.5px;"></div><svg class="a" style="left:3108.2px;top:868.7px;" width="27" height="27" viewBox="0 0 27 27"><use href="#pencil" width="27" height="27"/></svg><div class="a" style="left:451.2px;top:907.0px;width:2828.4px;height:54.3px;background:#f8f9fb;"></div><div class="a" style="left:451.2px;top:948.8px;width:2460.8px;height:1.8px;background:#f1f3f6;"></div><div class="a" style="left:2912.0px;top:954.6px;width:158.0px;height:1.6px;background:#f1f3f6;"></div><span class="t" style="left:455.2px;top:926.0px;font-size:20.5px;color:#0a0a0a;letter-spacing:-0.348px;">VEL-MBD-0002</span><span class="t" style="left:682.1px;top:926.0px;font-size:20.5px;color:#0a0a0a;letter-spacing:-0.087px;">4711081960251</span><span class="t" style="left:909.5px;top:927.0px;font-size:19.95px;color:#0a0a0a;letter-spacing:-0.271px;transform:scaleX(0.9342);transform-origin:0 0;">ASUS</span><span class="t" style="left:965.5px;top:927.0px;font-size:19.95px;color:#0a0a0a;letter-spacing:-0.291px;transform:scaleX(0.9264);transform-origin:0 0;">TUF</span><span class="t" style="left:1006.9px;top:927.0px;font-size:19.95px;color:#0a0a0a;letter-spacing:0.479px;">Gaming</span><span class="t" style="left:1085.2px;top:927.0px;font-size:19.95px;color:#0a0a0a;letter-spacing:-0.035px;">B650-Plus</span><span class="t" style="left:1183.0px;top:927.0px;font-size:19.95px;color:#0a0a0a;letter-spacing:-0.454px;">WIFI</span><span class="t" style="left:2636.3px;top:926.0px;font-size:20.5px;color:#0a0a0a;">7</span><span class="t" style="left:2793.0px;top:927.0px;font-size:19.67px;color:#0a0a0a;letter-spacing:-0.203px;">Stk</span><div class="a" style="left:2916.1px;top:918.8px;width:86.6px;height:31.5px;background:#dcfce7;border-radius:10.5px;"></div><div class="a" style="left:2927.6px;top:933.1px;width:8.7px;height:8.7px;background:#16803c;border-radius:4.4px;"></div><span class="t" style="left:2948.3px;top:925.0px;font-size:20.24px;color:#15803d;letter-spacing:0.110px;-webkit-text-stroke:0.62px #15803d;">Aktiv</span><div class="a" style="left:3077.0px;top:911.5px;width:91.1px;height:46.0px;background:#1463ff;border-radius:11.5px;"></div><svg class="a" style="left:3108.2px;top:923.0px;" width="27" height="27" viewBox="0 0 27 27"><use href="#pencil" width="27" height="27"/></svg><div class="a" style="left:451.2px;top:961.3px;width:2828.4px;height:54.3px;background:#ffffff;"></div><div class="a" style="left:451.2px;top:1003.1px;width:2460.8px;height:1.8px;background:#f1f3f6;"></div><div class="a" style="left:2912.0px;top:1008.9px;width:158.0px;height:1.6px;background:#f1f3f6;"></div><span class="t" style="left:455.2px;top:981.0px;font-size:19.57px;color:#0a0a0a;letter-spacing:-0.176px;">VEL-CAS-0001</span><span class="t" style="left:682.1px;top:980.0px;font-size:20.5px;color:#0a0a0a;letter-spacing:-0.213px;">4260052187947</span><span class="t" style="left:909.5px;top:980.0px;font-size:20.5px;color:#0a0a0a;letter-spacing:0.215px;">be</span><span class="t" style="left:938.6px;top:980.0px;font-size:20.5px;color:#0a0a0a;letter-spacing:0.150px;transform:scaleX(1.0425);transform-origin:0 0;">quiet!</span><span class="t" style="left:997.7px;top:980.0px;font-size:20.5px;color:#0a0a0a;letter-spacing:-0.217px;transform:scaleX(0.9755);transform-origin:0 0;">Pure</span><span class="t" style="left:1045.4px;top:980.0px;font-size:20.5px;color:#0a0a0a;letter-spacing:-0.234px;transform:scaleX(0.9192);transform-origin:0 0;">Base</span><span class="t" style="left:1093.7px;top:980.0px;font-size:20.5px;color:#0a0a0a;letter-spacing:-0.517px;">500DX</span><span class="t" style="left:1160.4px;top:980.0px;font-size:20.5px;color:#0a0a0a;letter-spacing:-0.188px;transform:scaleX(0.9647);transform-origin:0 0;">Black</span><span class="t" style="left:2636.3px;top:980.0px;font-size:20.5px;color:#0a0a0a;">6</span><span class="t" style="left:2793.0px;top:981.0px;font-size:19.67px;color:#0a0a0a;letter-spacing:-0.203px;">Stk</span><div class="a" style="left:2916.1px;top:973.1px;width:86.6px;height:31.5px;background:#dcfce7;border-radius:10.5px;"></div><div class="a" style="left:2927.6px;top:987.4px;width:8.7px;height:8.7px;background:#16803c;border-radius:4.4px;"></div><span class="t" style="left:2948.3px;top:980.0px;font-size:20.24px;color:#15803d;letter-spacing:0.110px;-webkit-text-stroke:0.62px #15803d;">Aktiv</span><div class="a" style="left:3077.0px;top:965.8px;width:91.1px;height:46.0px;background:#1463ff;border-radius:11.5px;"></div><svg class="a" style="left:3108.2px;top:977.3px;" width="27" height="27" viewBox="0 0 27 27"><use href="#pencil" width="27" height="27"/></svg><div class="a" style="left:451.2px;top:1015.6px;width:2828.4px;height:54.3px;background:#f8f9fb;"></div><div class="a" style="left:451.2px;top:1057.4px;width:2460.8px;height:1.8px;background:#f1f3f6;"></div><div class="a" style="left:2912.0px;top:1063.2px;width:158.0px;height:1.6px;background:#f1f3f6;"></div><span class="t" style="left:455.2px;top:1036.0px;font-size:19.57px;color:#0a0a0a;letter-spacing:-0.176px;">VEL-CAS-0004</span><span class="t" style="left:682.1px;top:1035.0px;font-size:20.5px;color:#0a0a0a;letter-spacing:-0.213px;">0840006621897</span><span class="t" style="left:909.5px;top:1035.0px;font-size:20.5px;color:#0a0a0a;letter-spacing:-0.295px;">Corsair</span><span class="t" style="left:979.9px;top:1035.0px;font-size:20.5px;color:#0a0a0a;letter-spacing:-0.179px;">4000D</span><span class="t" style="left:1045.6px;top:1035.0px;font-size:20.5px;color:#0a0a0a;letter-spacing:0.154px;transform:scaleX(1.0372);transform-origin:0 0;">Airflow</span><span class="t" style="left:1116.4px;top:1035.0px;font-size:20.5px;color:#0a0a0a;letter-spacing:-0.188px;transform:scaleX(0.9647);transform-origin:0 0;">Black</span><span class="t" style="left:2636.3px;top:1035.0px;font-size:20.5px;color:#0a0a0a;">6</span><span class="t" style="left:2793.0px;top:1036.0px;font-size:19.67px;color:#0a0a0a;letter-spacing:-0.203px;">Stk</span><div class="a" style="left:2916.1px;top:1027.4px;width:86.6px;height:31.5px;background:#dcfce7;border-radius:10.5px;"></div><div class="a" style="left:2927.6px;top:1041.7px;width:8.7px;height:8.7px;background:#16803c;border-radius:4.4px;"></div><span class="t" style="left:2948.3px;top:1034.0px;font-size:20.24px;color:#15803d;letter-spacing:0.110px;-webkit-text-stroke:0.62px #15803d;">Aktiv</span><div class="a" style="left:3077.0px;top:1020.1px;width:91.1px;height:46.0px;background:#1463ff;border-radius:11.5px;"></div><svg class="a" style="left:3108.2px;top:1031.6px;" width="27" height="27" viewBox="0 0 27 27"><use href="#pencil" width="27" height="27"/></svg><div class="a" style="left:451.2px;top:1069.8px;width:2828.4px;height:54.3px;background:#ffffff;"></div><div class="a" style="left:451.2px;top:1084.0px;width:2460.8px;height:29.3px;background:#eef1fd;"></div><div class="a" style="left:2912.0px;top:1077.4px;width:158.0px;height:41.6px;background:#eef1fd;"></div><div class="a" style="left:3070.0px;top:1069.8px;width:209.6px;height:54.3px;background:#eef1fd;"></div><span class="t" style="left:455.2px;top:1089.0px;font-size:20.5px;color:#3546b8;letter-spacing:-0.406px;">VEL-RAM-0002</span><span class="t" style="left:682.1px;top:1089.0px;font-size:20.5px;color:#3546b8;letter-spacing:-0.213px;">0840006660995</span><span class="t" style="left:909.5px;top:1089.0px;font-size:20.5px;color:#3546b8;letter-spacing:-0.295px;">Corsair</span><span class="t" style="left:979.9px;top:1089.0px;font-size:20.5px;color:#3546b8;letter-spacing:-0.057px;">Vengeance</span><span class="t" style="left:1088.1px;top:1089.0px;font-size:20.5px;color:#3546b8;letter-spacing:-0.291px;transform:scaleX(0.8795);transform-origin:0 0;">LPX</span><span class="t" style="left:1127.7px;top:1089.0px;font-size:20.5px;color:#3546b8;letter-spacing:-0.262px;transform:scaleX(0.9452);transform-origin:0 0;">32GB</span><span class="t" style="left:1182.6px;top:1089.0px;font-size:20.5px;color:#3546b8;letter-spacing:-0.191px;">DDR4-3200</span><span class="t" style="left:1295.3px;top:1089.0px;font-size:20.5px;color:#3546b8;letter-spacing:-0.245px;transform:scaleX(0.9366);transform-origin:0 0;">CL16</span><span class="t" style="left:1346.6px;top:1089.0px;font-size:20.5px;color:#3546b8;letter-spacing:0.073px;">Kit</span><span class="t" style="left:2636.3px;top:1089.0px;font-size:20.5px;color:#3546b8;">15</span><span class="t" style="left:2793.0px;top:1090.0px;font-size:19.67px;color:#3546b8;letter-spacing:-0.203px;">Stk</span><div class="a" style="left:2916.1px;top:1081.6px;width:86.6px;height:31.5px;background:#dcfce7;border-radius:10.5px;"></div><div class="a" style="left:2927.6px;top:1095.9px;width:8.7px;height:8.7px;background:#16803c;border-radius:4.4px;"></div><span class="t" style="left:2948.3px;top:1088.0px;font-size:20.24px;color:#15803d;letter-spacing:0.110px;-webkit-text-stroke:0.62px #15803d;">Aktiv</span><div class="a" style="left:3077.0px;top:1074.3px;width:91.1px;height:46.0px;background:#1463ff;border-radius:11.5px;"></div><svg class="a" style="left:3108.2px;top:1085.8px;" width="27" height="27" viewBox="0 0 27 27"><use href="#pencil" width="27" height="27"/></svg><div class="a" style="left:451.2px;top:1124.1px;width:2828.4px;height:54.3px;background:#f8f9fb;"></div><div class="a" style="left:451.2px;top:1165.9px;width:2460.8px;height:1.8px;background:#f1f3f6;"></div><div class="a" style="left:2912.0px;top:1171.7px;width:158.0px;height:1.6px;background:#f1f3f6;"></div><span class="t" style="left:455.2px;top:1143.0px;font-size:20.5px;color:#0a0a0a;letter-spacing:-0.406px;">VEL-RAM-0004</span><span class="t" style="left:682.1px;top:1143.0px;font-size:20.5px;color:#0a0a0a;letter-spacing:-0.213px;">0649528935672</span><span class="t" style="left:909.5px;top:1143.0px;font-size:20.5px;color:#0a0a0a;letter-spacing:-0.227px;">Crucial</span><span class="t" style="left:978.0px;top:1143.0px;font-size:20.5px;color:#0a0a0a;letter-spacing:-0.415px;">Pro</span><span class="t" style="left:1015.1px;top:1143.0px;font-size:20.5px;color:#0a0a0a;letter-spacing:-0.262px;transform:scaleX(0.9452);transform-origin:0 0;">32GB</span><span class="t" style="left:1070.0px;top:1143.0px;font-size:20.5px;color:#0a0a0a;letter-spacing:-0.191px;">DDR5-5600</span><span class="t" style="left:1182.7px;top:1143.0px;font-size:20.5px;color:#0a0a0a;letter-spacing:0.261px;transform:scaleX(1.0233);transform-origin:0 0;">UDIMM</span><span class="t" style="left:2636.3px;top:1143.0px;font-size:20.5px;color:#0a0a0a;">8</span><span class="t" style="left:2793.0px;top:1144.0px;font-size:19.67px;color:#0a0a0a;letter-spacing:-0.203px;">Stk</span><div class="a" style="left:2916.1px;top:1135.9px;width:86.6px;height:31.5px;background:#dcfce7;border-radius:10.5px;"></div><div class="a" style="left:2927.6px;top:1150.2px;width:8.7px;height:8.7px;background:#16803c;border-radius:4.4px;"></div><span class="t" style="left:2948.3px;top:1143.0px;font-size:20.24px;color:#15803d;letter-spacing:0.110px;-webkit-text-stroke:0.62px #15803d;">Aktiv</span><div class="a" style="left:3077.0px;top:1128.6px;width:91.1px;height:46.0px;background:#1463ff;border-radius:11.5px;"></div><svg class="a" style="left:3108.2px;top:1140.1px;" width="27" height="27" viewBox="0 0 27 27"><use href="#pencil" width="27" height="27"/></svg><div class="a" style="left:451.2px;top:1178.4px;width:2828.4px;height:54.3px;background:#ffffff;"></div><div class="a" style="left:451.2px;top:1220.2px;width:2460.8px;height:1.8px;background:#f1f3f6;"></div><div class="a" style="left:2912.0px;top:1226.0px;width:158.0px;height:1.6px;background:#f1f3f6;"></div><span class="t" style="left:455.2px;top:1198.0px;font-size:19.57px;color:#0a0a0a;letter-spacing:-0.176px;">VEL-CAS-0002</span><span class="t" style="left:682.1px;top:1197.0px;font-size:20.5px;color:#0a0a0a;letter-spacing:-0.213px;">7340172703575</span><span class="t" style="left:909.5px;top:1197.0px;font-size:20.5px;color:#0a0a0a;letter-spacing:-0.355px;">Fractal</span><span class="t" style="left:976.1px;top:1197.0px;font-size:20.5px;color:#0a0a0a;letter-spacing:-0.038px;">Design</span><span class="t" style="left:1045.8px;top:1197.0px;font-size:20.5px;color:#0a0a0a;letter-spacing:-0.186px;">Pop</span><span class="t" style="left:1087.9px;top:1197.0px;font-size:20.5px;color:#0a0a0a;letter-spacing:0.290px;">Air</span><span class="t" style="left:1119.6px;top:1197.0px;font-size:20.5px;color:#0a0a0a;letter-spacing:-0.333px;transform:scaleX(0.8850);transform-origin:0 0;">RGB</span><span class="t" style="left:1164.4px;top:1197.0px;font-size:20.5px;color:#0a0a0a;letter-spacing:-0.188px;transform:scaleX(0.9647);transform-origin:0 0;">Black</span><span class="t" style="left:1218.1px;top:1197.0px;font-size:20.5px;color:#0a0a0a;letter-spacing:-0.427px;transform:scaleX(0.8962);transform-origin:0 0;">TG</span><span class="t" style="left:2636.3px;top:1197.0px;font-size:20.5px;color:#0a0a0a;">7</span><span class="t" style="left:2793.0px;top:1198.0px;font-size:19.67px;color:#0a0a0a;letter-spacing:-0.203px;">Stk</span><div class="a" style="left:2916.1px;top:1190.2px;width:86.6px;height:31.5px;background:#dcfce7;border-radius:10.5px;"></div><div class="a" style="left:2927.6px;top:1204.5px;width:8.7px;height:8.7px;background:#16803c;border-radius:4.4px;"></div><span class="t" style="left:2948.3px;top:1197.0px;font-size:20.24px;color:#15803d;letter-spacing:0.110px;-webkit-text-stroke:0.62px #15803d;">Aktiv</span><div class="a" style="left:3077.0px;top:1182.9px;width:91.1px;height:46.0px;background:#1463ff;border-radius:11.5px;"></div><svg class="a" style="left:3108.2px;top:1194.4px;" width="27" height="27" viewBox="0 0 27 27"><use href="#pencil" width="27" height="27"/></svg><div class="a" style="left:451.2px;top:1232.7px;width:2828.4px;height:54.3px;background:#f8f9fb;"></div><div class="a" style="left:451.2px;top:1274.5px;width:2460.8px;height:1.8px;background:#f1f3f6;"></div><div class="a" style="left:2912.0px;top:1280.3px;width:158.0px;height:1.6px;background:#f1f3f6;"></div><span class="t" style="left:455.2px;top:1252.0px;font-size:20.5px;color:#0a0a0a;letter-spacing:-0.406px;">VEL-RAM-0003</span><span class="t" style="left:682.1px;top:1252.0px;font-size:20.5px;color:#0a0a0a;letter-spacing:-0.213px;">4713294224380</span><span class="t" style="left:909.5px;top:1253.0px;font-size:19.99px;color:#0a0a0a;letter-spacing:-0.144px;transform:scaleX(0.9761);transform-origin:0 0;">G.Skill</span><span class="t" style="left:971.1px;top:1253.0px;font-size:19.99px;color:#0a0a0a;letter-spacing:-0.189px;transform:scaleX(0.9669);transform-origin:0 0;">RipJaws</span><span class="t" style="left:1049.1px;top:1253.0px;font-size:19.99px;color:#0a0a0a;">V</span><span class="t" style="left:1067.9px;top:1253.0px;font-size:19.99px;color:#0a0a0a;letter-spacing:-0.256px;transform:scaleX(0.9695);transform-origin:0 0;">32GB</span><span class="t" style="left:1122.7px;top:1253.0px;font-size:19.99px;color:#0a0a0a;letter-spacing:0.149px;">DDR4-3600</span><span class="t" style="left:1235.5px;top:1253.0px;font-size:19.99px;color:#0a0a0a;letter-spacing:-0.239px;transform:scaleX(0.9607);transform-origin:0 0;">CL18</span><span class="t" style="left:1286.8px;top:1253.0px;font-size:19.99px;color:#0a0a0a;letter-spacing:0.378px;">Kit</span><span class="t" style="left:2636.3px;top:1252.0px;font-size:20.5px;color:#0a0a0a;">10</span><span class="t" style="left:2793.0px;top:1253.0px;font-size:19.67px;color:#0a0a0a;letter-spacing:-0.203px;">Stk</span><div class="a" style="left:2916.1px;top:1244.5px;width:86.6px;height:31.5px;background:#dcfce7;border-radius:10.5px;"></div><div class="a" style="left:2927.6px;top:1258.8px;width:8.7px;height:8.7px;background:#16803c;border-radius:4.4px;"></div><span class="t" style="left:2948.3px;top:1251.0px;font-size:20.24px;color:#15803d;letter-spacing:0.110px;-webkit-text-stroke:0.62px #15803d;">Aktiv</span><div class="a" style="left:3077.0px;top:1237.2px;width:91.1px;height:46.0px;background:#1463ff;border-radius:11.5px;"></div><svg class="a" style="left:3108.2px;top:1248.7px;" width="27" height="27" viewBox="0 0 27 27"><use href="#pencil" width="27" height="27"/></svg><div class="a" style="left:451.2px;top:1287.0px;width:2828.4px;height:54.3px;background:#ffffff;"></div><div class="a" style="left:451.2px;top:1328.8px;width:2460.8px;height:1.8px;background:#f1f3f6;"></div><div class="a" style="left:2912.0px;top:1334.6px;width:158.0px;height:1.6px;background:#f1f3f6;"></div><span class="t" style="left:455.2px;top:1306.0px;font-size:20.5px;color:#0a0a0a;letter-spacing:-0.348px;">VEL-MBD-0003</span><span class="t" style="left:682.1px;top:1306.0px;font-size:20.5px;color:#0a0a0a;letter-spacing:-0.213px;">4719331850962</span><span class="t" style="left:909.5px;top:1307.0px;font-size:19.7px;color:#0a0a0a;letter-spacing:-0.216px;transform:scaleX(0.9376);transform-origin:0 0;">GIGABYTE</span><span class="t" style="left:1008.5px;top:1307.0px;font-size:19.7px;color:#0a0a0a;letter-spacing:-0.095px;">B760</span><span class="t" style="left:1060.3px;top:1307.0px;font-size:19.7px;color:#0a0a0a;letter-spacing:0.207px;transform:scaleX(1.0319);transform-origin:0 0;">Gaming</span><span class="t" style="left:1138.5px;top:1307.0px;font-size:19.7px;color:#0a0a0a;">X</span><span class="t" style="left:1156.5px;top:1307.0px;font-size:19.7px;color:#0a0a0a;letter-spacing:-0.190px;">DDR4</span><span class="t" style="left:1215.6px;top:1307.0px;font-size:19.7px;color:#0a0a0a;letter-spacing:-0.615px;">GEN5</span><span class="t" style="left:2636.3px;top:1306.0px;font-size:20.5px;color:#0a0a0a;">9</span><span class="t" style="left:2793.0px;top:1307.0px;font-size:19.67px;color:#0a0a0a;letter-spacing:-0.203px;">Stk</span><div class="a" style="left:2916.1px;top:1298.8px;width:86.6px;height:31.5px;background:#dcfce7;border-radius:10.5px;"></div><div class="a" style="left:2927.6px;top:1313.1px;width:8.7px;height:8.7px;background:#16803c;border-radius:4.4px;"></div><span class="t" style="left:2948.3px;top:1305.0px;font-size:20.24px;color:#15803d;letter-spacing:0.110px;-webkit-text-stroke:0.62px #15803d;">Aktiv</span><div class="a" style="left:3077.0px;top:1291.5px;width:91.1px;height:46.0px;background:#1463ff;border-radius:11.5px;"></div><svg class="a" style="left:3108.2px;top:1303.0px;" width="27" height="27" viewBox="0 0 27 27"><use href="#pencil" width="27" height="27"/></svg><div class="a" style="left:451.2px;top:1341.2px;width:2828.4px;height:54.3px;background:#f8f9fb;"></div><div class="a" style="left:451.2px;top:1383.0px;width:2460.8px;height:1.8px;background:#f1f3f6;"></div><div class="a" style="left:2912.0px;top:1388.8px;width:158.0px;height:1.6px;background:#f1f3f6;"></div><span class="t" style="left:455.2px;top:1361.0px;font-size:19.64px;color:#0a0a0a;letter-spacing:-0.178px;">VEL-CPU-0002</span><span class="t" style="left:682.1px;top:1360.0px;font-size:20.5px;color:#0a0a0a;letter-spacing:-0.213px;">5032037278528</span><span class="t" style="left:909.5px;top:1360.0px;font-size:20.5px;color:#0a0a0a;letter-spacing:0.145px;transform:scaleX(1.0256);transform-origin:0 0;">Intel</span><span class="t" style="left:955.9px;top:1360.0px;font-size:20.5px;color:#0a0a0a;letter-spacing:-0.379px;">Core</span><span class="t" style="left:1005.2px;top:1360.0px;font-size:20.5px;color:#0a0a0a;letter-spacing:-0.023px;">i5-14600K</span><span class="t" style="left:2636.3px;top:1360.0px;font-size:20.5px;color:#0a0a0a;">9</span><span class="t" style="left:2793.0px;top:1361.0px;font-size:19.67px;color:#0a0a0a;letter-spacing:-0.203px;">Stk</span><div class="a" style="left:2916.1px;top:1353.0px;width:86.6px;height:31.5px;background:#dcfce7;border-radius:10.5px;"></div><div class="a" style="left:2927.6px;top:1367.3px;width:8.7px;height:8.7px;background:#16803c;border-radius:4.4px;"></div><span class="t" style="left:2948.3px;top:1360.0px;font-size:20.24px;color:#15803d;letter-spacing:0.110px;-webkit-text-stroke:0.62px #15803d;">Aktiv</span><div class="a" style="left:3077.0px;top:1345.7px;width:91.1px;height:46.0px;background:#1463ff;border-radius:11.5px;"></div><svg class="a" style="left:3108.2px;top:1357.2px;" width="27" height="27" viewBox="0 0 27 27"><use href="#pencil" width="27" height="27"/></svg><div class="a" style="left:451.2px;top:1395.5px;width:2828.4px;height:54.3px;background:#ffffff;"></div><div class="a" style="left:451.2px;top:1437.3px;width:2460.8px;height:1.8px;background:#f1f3f6;"></div><div class="a" style="left:2912.0px;top:1443.1px;width:158.0px;height:1.6px;background:#f1f3f6;"></div><span class="t" style="left:455.2px;top:1416.0px;font-size:19.64px;color:#0a0a0a;letter-spacing:-0.178px;">VEL-CPU-0004</span><span class="t" style="left:682.1px;top:1415.0px;font-size:20.5px;color:#0a0a0a;letter-spacing:-0.087px;">5032037278511</span><span class="t" style="left:909.5px;top:1415.0px;font-size:20.5px;color:#0a0a0a;letter-spacing:0.145px;transform:scaleX(1.0256);transform-origin:0 0;">Intel</span><span class="t" style="left:955.9px;top:1415.0px;font-size:20.5px;color:#0a0a0a;letter-spacing:-0.379px;">Core</span><span class="t" style="left:1005.2px;top:1415.0px;font-size:20.5px;color:#0a0a0a;letter-spacing:-0.023px;">i7-14700K</span><span class="t" style="left:2636.3px;top:1415.0px;font-size:20.5px;color:#0a0a0a;">5</span><span class="t" style="left:2793.0px;top:1416.0px;font-size:19.67px;color:#0a0a0a;letter-spacing:-0.203px;">Stk</span><div class="a" style="left:2916.1px;top:1407.3px;width:86.6px;height:31.5px;background:#dcfce7;border-radius:10.5px;"></div><div class="a" style="left:2927.6px;top:1421.6px;width:8.7px;height:8.7px;background:#16803c;border-radius:4.4px;"></div><span class="t" style="left:2948.3px;top:1414.0px;font-size:20.24px;color:#15803d;letter-spacing:0.110px;-webkit-text-stroke:0.62px #15803d;">Aktiv</span><div class="a" style="left:3077.0px;top:1400.0px;width:91.1px;height:46.0px;background:#1463ff;border-radius:11.5px;"></div><svg class="a" style="left:3108.2px;top:1411.5px;" width="27" height="27" viewBox="0 0 27 27"><use href="#pencil" width="27" height="27"/></svg><div class="a" style="left:451.2px;top:1449.8px;width:2828.4px;height:54.3px;background:#f8f9fb;"></div><div class="a" style="left:451.2px;top:1491.6px;width:2460.8px;height:1.8px;background:#f1f3f6;"></div><div class="a" style="left:2912.0px;top:1497.4px;width:158.0px;height:1.6px;background:#f1f3f6;"></div><span class="t" style="left:455.2px;top:1469.0px;font-size:20.5px;color:#0a0a0a;letter-spacing:-0.406px;">VEL-RAM-0001</span><span class="t" style="left:682.1px;top:1469.0px;font-size:20.5px;color:#0a0a0a;letter-spacing:-0.213px;">0740617330310</span><span class="t" style="left:909.5px;top:1469.0px;font-size:20.5px;color:#0a0a0a;letter-spacing:0.229px;">Kingston</span><span class="t" style="left:996.9px;top:1469.0px;font-size:20.5px;color:#0a0a0a;letter-spacing:-0.277px;transform:scaleX(0.8891);transform-origin:0 0;">FURY</span><span class="t" style="left:1051.5px;top:1469.0px;font-size:20.5px;color:#0a0a0a;letter-spacing:-0.197px;transform:scaleX(0.9573);transform-origin:0 0;">Beast</span><span class="t" style="left:1107.0px;top:1469.0px;font-size:20.5px;color:#0a0a0a;letter-spacing:-0.262px;transform:scaleX(0.9452);transform-origin:0 0;">32GB</span><span class="t" style="left:1161.9px;top:1469.0px;font-size:20.5px;color:#0a0a0a;letter-spacing:-0.191px;">DDR5-6000</span><span class="t" style="left:1274.7px;top:1469.0px;font-size:20.5px;color:#0a0a0a;letter-spacing:-0.245px;transform:scaleX(0.9366);transform-origin:0 0;">CL30</span><span class="t" style="left:1325.9px;top:1469.0px;font-size:20.5px;color:#0a0a0a;letter-spacing:0.073px;">Kit</span><span class="t" style="left:2636.3px;top:1469.0px;font-size:20.5px;color:#0a0a0a;">12</span><span class="t" style="left:2793.0px;top:1470.0px;font-size:19.67px;color:#0a0a0a;letter-spacing:-0.203px;">Stk</span><div class="a" style="left:2916.1px;top:1461.6px;width:86.6px;height:31.5px;background:#dcfce7;border-radius:10.5px;"></div><div class="a" style="left:2927.6px;top:1475.9px;width:8.7px;height:8.7px;background:#16803c;border-radius:4.4px;"></div><span class="t" style="left:2948.3px;top:1468.0px;font-size:20.24px;color:#15803d;letter-spacing:0.110px;-webkit-text-stroke:0.62px #15803d;">Aktiv</span><div class="a" style="left:3077.0px;top:1454.3px;width:91.1px;height:46.0px;background:#1463ff;border-radius:11.5px;"></div><svg class="a" style="left:3108.2px;top:1465.8px;" width="27" height="27" viewBox="0 0 27 27"><use href="#pencil" width="27" height="27"/></svg><div class="a" style="left:451.2px;top:1504.1px;width:2828.4px;height:54.3px;background:#ffffff;"></div><div class="a" style="left:451.2px;top:1545.9px;width:2460.8px;height:1.8px;background:#f1f3f6;"></div><div class="a" style="left:2912.0px;top:1551.7px;width:158.0px;height:1.6px;background:#f1f3f6;"></div><span class="t" style="left:455.2px;top:1523.0px;font-size:20.5px;color:#0a0a0a;letter-spacing:-0.348px;">VEL-MBD-0001</span><span class="t" style="left:682.1px;top:1523.0px;font-size:20.5px;color:#0a0a0a;letter-spacing:-0.087px;">4711377033690</span><span class="t" style="left:909.5px;top:1523.0px;font-size:20.5px;color:#0a0a0a;letter-spacing:-0.581px;">MSI</span><span class="t" style="left:950.8px;top:1523.0px;font-size:20.5px;color:#0a0a0a;letter-spacing:-0.239px;transform:scaleX(0.9688);transform-origin:0 0;">B650</span><span class="t" style="left:1002.6px;top:1523.0px;font-size:20.5px;color:#0a0a0a;letter-spacing:0.085px;">Gaming</span><span class="t" style="left:1080.9px;top:1523.0px;font-size:20.5px;color:#0a0a0a;letter-spacing:-0.199px;transform:scaleX(0.9498);transform-origin:0 0;">Plus</span><span class="t" style="left:1124.2px;top:1523.0px;font-size:20.5px;color:#0a0a0a;letter-spacing:-0.216px;transform:scaleX(0.9554);transform-origin:0 0;">WIFI</span><span class="t" style="left:2636.3px;top:1523.0px;font-size:20.5px;color:#0a0a0a;">8</span><span class="t" style="left:2793.0px;top:1524.0px;font-size:19.67px;color:#0a0a0a;letter-spacing:-0.203px;">Stk</span><div class="a" style="left:2916.1px;top:1515.9px;width:86.6px;height:31.5px;background:#dcfce7;border-radius:10.5px;"></div><div class="a" style="left:2927.6px;top:1530.2px;width:8.7px;height:8.7px;background:#16803c;border-radius:4.4px;"></div><span class="t" style="left:2948.3px;top:1522.0px;font-size:20.24px;color:#15803d;letter-spacing:0.110px;-webkit-text-stroke:0.62px #15803d;">Aktiv</span><div class="a" style="left:3077.0px;top:1508.6px;width:91.1px;height:46.0px;background:#1463ff;border-radius:11.5px;"></div><svg class="a" style="left:3108.2px;top:1520.1px;" width="27" height="27" viewBox="0 0 27 27"><use href="#pencil" width="27" height="27"/></svg><div class="a" style="left:451.2px;top:1558.4px;width:2828.4px;height:54.3px;background:#f8f9fb;"></div><div class="a" style="left:451.2px;top:1600.2px;width:2460.8px;height:1.8px;background:#f1f3f6;"></div><div class="a" style="left:2912.0px;top:1606.0px;width:158.0px;height:1.6px;background:#f1f3f6;"></div><span class="t" style="left:455.2px;top:1577.0px;font-size:20.5px;color:#0a0a0a;letter-spacing:-0.348px;">VEL-MBD-0004</span><span class="t" style="left:682.1px;top:1577.0px;font-size:20.5px;color:#0a0a0a;letter-spacing:-0.087px;">4711377010158</span><span class="t" style="left:909.5px;top:1577.0px;font-size:20.5px;color:#0a0a0a;letter-spacing:-0.581px;">MSI</span><span class="t" style="left:950.8px;top:1577.0px;font-size:20.5px;color:#0a0a0a;letter-spacing:-0.087px;">MAG</span><span class="t" style="left:1003.4px;top:1577.0px;font-size:20.5px;color:#0a0a0a;letter-spacing:-0.239px;transform:scaleX(0.9688);transform-origin:0 0;">B650</span><span class="t" style="left:1055.2px;top:1577.0px;font-size:20.5px;color:#0a0a0a;letter-spacing:0.275px;">Tomahawk</span><span class="t" style="left:1161.2px;top:1577.0px;font-size:20.5px;color:#0a0a0a;letter-spacing:-0.216px;transform:scaleX(0.9554);transform-origin:0 0;">WIFI</span><span class="t" style="left:1970.7px;top:1577.0px;font-size:20.5px;color:#0a0a0a;letter-spacing:0.198px;">Mainboards</span><span class="t" style="left:2215.7px;top:1578.0px;font-size:19.8px;color:#0a0a0a;letter-spacing:-0.172px;">165.59</span><span class="t" style="left:2408.0px;top:1578.0px;font-size:19.8px;color:#0a0a0a;letter-spacing:-0.172px;">157.50</span><span class="t" style="left:2636.3px;top:1577.0px;font-size:20.5px;color:#0a0a0a;">6</span><span class="t" style="left:2793.0px;top:1578.0px;font-size:19.67px;color:#0a0a0a;letter-spacing:-0.203px;">Stk</span><div class="a" style="left:2916.1px;top:1570.2px;width:86.6px;height:31.5px;background:#dcfce7;border-radius:10.5px;"></div><div class="a" style="left:2927.6px;top:1584.5px;width:8.7px;height:8.7px;background:#16803c;border-radius:4.4px;"></div><span class="t" style="left:2948.3px;top:1577.0px;font-size:20.24px;color:#15803d;letter-spacing:0.110px;-webkit-text-stroke:0.62px #15803d;">Aktiv</span><div class="a" style="left:3077.0px;top:1562.9px;width:91.1px;height:46.0px;background:#1463ff;border-radius:11.5px;"></div><svg class="a" style="left:3108.2px;top:1574.4px;" width="27" height="27" viewBox="0 0 27 27"><use href="#pencil" width="27" height="27"/></svg><div class="a" style="left:451.2px;top:1612.6px;width:2828.4px;height:54.3px;background:#ffffff;"></div><div class="a" style="left:451.2px;top:1654.4px;width:2460.8px;height:1.8px;background:#f1f3f6;"></div><div class="a" style="left:2912.0px;top:1660.2px;width:158.0px;height:1.6px;background:#f1f3f6;"></div><span class="t" style="left:455.2px;top:1633.0px;font-size:19.57px;color:#0a0a0a;letter-spacing:-0.176px;">VEL-CAS-0003</span><span class="t" style="left:682.1px;top:1632.0px;font-size:20.5px;color:#0a0a0a;letter-spacing:-0.213px;">5056547205003</span><span class="t" style="left:909.5px;top:1632.0px;font-size:20.5px;color:#0a0a0a;letter-spacing:-0.268px;transform:scaleX(0.9600);transform-origin:0 0;">NZXT</span><span class="t" style="left:966.2px;top:1632.0px;font-size:20.5px;color:#0a0a0a;letter-spacing:-0.289px;">H5</span><span class="t" style="left:998.2px;top:1632.0px;font-size:20.5px;color:#0a0a0a;letter-spacing:-0.269px;">Flow</span><span class="t" style="left:1046.7px;top:1632.0px;font-size:20.5px;color:#0a0a0a;letter-spacing:0.197px;transform:scaleX(1.0216);transform-origin:0 0;">White</span><span class="t" style="left:1970.7px;top:1633.0px;font-size:19.56px;color:#0a0a0a;letter-spacing:-0.188px;">Gehäuse</span><span class="t" style="left:2215.7px;top:1633.0px;font-size:19.6px;color:#0a0a0a;letter-spacing:-0.178px;">87.08</span><span class="t" style="left:2408.0px;top:1633.0px;font-size:19.6px;color:#0a0a0a;letter-spacing:-0.178px;">80.60</span><span class="t" style="left:2636.3px;top:1632.0px;font-size:20.5px;color:#0a0a0a;">5</span><span class="t" style="left:2793.0px;top:1633.0px;font-size:19.67px;color:#0a0a0a;letter-spacing:-0.203px;">Stk</span><div class="a" style="left:2916.1px;top:1624.4px;width:86.6px;height:31.5px;background:#dcfce7;border-radius:10.5px;"></div><div class="a" style="left:2927.6px;top:1638.7px;width:8.7px;height:8.7px;background:#16803c;border-radius:4.4px;"></div><span class="t" style="left:2948.3px;top:1631.0px;font-size:20.24px;color:#15803d;letter-spacing:0.110px;-webkit-text-stroke:0.62px #15803d;">Aktiv</span><div class="a" style="left:3077.0px;top:1617.1px;width:91.1px;height:46.0px;background:#1463ff;border-radius:11.5px;"></div><svg class="a" style="left:3108.2px;top:1628.6px;" width="27" height="27" viewBox="0 0 27 27"><use href="#pencil" width="27" height="27"/></svg><div class="a" style="left:451.2px;top:1666.9px;width:2828.4px;height:54.3px;background:#f8f9fb;"></div><div class="a" style="left:451.2px;top:1708.7px;width:2460.8px;height:1.8px;background:#f1f3f6;"></div><div class="a" style="left:2912.0px;top:1714.5px;width:158.0px;height:1.6px;background:#f1f3f6;"></div><span class="t" style="left:455.2px;top:1687.0px;font-size:19.69px;color:#0a0a0a;letter-spacing:-0.188px;">VEL-GPU-0004</span><span class="t" style="left:682.1px;top:1686.0px;font-size:20.5px;color:#0a0a0a;letter-spacing:-0.213px;">4895106293272</span><span class="t" style="left:909.5px;top:1686.0px;font-size:20.07px;color:#0a0a0a;letter-spacing:0.165px;">Sapphire</span><span class="t" style="left:997.0px;top:1686.0px;font-size:20.07px;color:#0a0a0a;letter-spacing:-0.188px;transform:scaleX(0.9771);transform-origin:0 0;">Pulse</span><span class="t" style="left:1051.4px;top:1686.0px;font-size:20.07px;color:#0a0a0a;letter-spacing:0.036px;">Radeon</span><span class="t" style="left:1127.9px;top:1686.0px;font-size:20.07px;color:#0a0a0a;letter-spacing:-0.418px;transform:scaleX(0.8925);transform-origin:0 0;">RX</span><span class="t" style="left:1158.4px;top:1686.0px;font-size:20.07px;color:#0a0a0a;letter-spacing:0.114px;">7700</span><span class="t" style="left:1209.5px;top:1686.0px;font-size:20.07px;color:#0a0a0a;letter-spacing:-0.385px;transform:scaleX(0.9081);transform-origin:0 0;">XT</span><span class="t" style="left:1238.5px;top:1686.0px;font-size:20.07px;color:#0a0a0a;letter-spacing:-0.257px;transform:scaleX(0.9656);transform-origin:0 0;">12GB</span><span class="t" style="left:1970.7px;top:1686.0px;font-size:20.5px;color:#0a0a0a;letter-spacing:-0.022px;">Grafikkarten</span><span class="t" style="left:2215.7px;top:1687.0px;font-size:19.8px;color:#0a0a0a;letter-spacing:-0.172px;">480.83</span><span class="t" style="left:2408.0px;top:1687.0px;font-size:19.8px;color:#0a0a0a;letter-spacing:-0.172px;">478.23</span><span class="t" style="left:2636.3px;top:1686.0px;font-size:20.5px;color:#0a0a0a;">4</span><span class="t" style="left:2793.0px;top:1687.0px;font-size:19.67px;color:#0a0a0a;letter-spacing:-0.203px;">Stk</span><div class="a" style="left:2916.1px;top:1678.7px;width:86.6px;height:31.5px;background:#dcfce7;border-radius:10.5px;"></div><div class="a" style="left:2927.6px;top:1693.0px;width:8.7px;height:8.7px;background:#16803c;border-radius:4.4px;"></div><span class="t" style="left:2948.3px;top:1685.0px;font-size:20.24px;color:#15803d;letter-spacing:0.110px;-webkit-text-stroke:0.62px #15803d;">Aktiv</span><div class="a" style="left:3077.0px;top:1671.4px;width:91.1px;height:46.0px;background:#1463ff;border-radius:11.5px;"></div><svg class="a" style="left:3108.2px;top:1682.9px;" width="27" height="27" viewBox="0 0 27 27"><use href="#pencil" width="27" height="27"/></svg><div class="a" style="left:451.2px;top:1721.2px;width:2828.4px;height:54.3px;background:#ffffff;"></div><div class="a" style="left:451.2px;top:1763.0px;width:2460.8px;height:1.8px;background:#f1f3f6;"></div><div class="a" style="left:2912.0px;top:1768.8px;width:158.0px;height:1.6px;background:#f1f3f6;"></div><span class="t" style="left:455.2px;top:1741.0px;font-size:19.69px;color:#0a0a0a;letter-spacing:-0.188px;">VEL-GPU-0003</span><span class="t" style="left:682.1px;top:1740.0px;font-size:20.5px;color:#0a0a0a;letter-spacing:-0.213px;">0840191501295</span><span class="t" style="left:909.5px;top:1740.0px;font-size:20.5px;color:#0a0a0a;letter-spacing:-0.299px;transform:scaleX(0.8761);transform-origin:0 0;">XFX</span><span class="t" style="left:950.0px;top:1740.0px;font-size:20.5px;color:#0a0a0a;letter-spacing:-0.203px;">Speedster</span><span class="t" style="left:1047.8px;top:1740.0px;font-size:20.5px;color:#0a0a0a;letter-spacing:-0.251px;transform:scaleX(0.9378);transform-origin:0 0;">QICK</span><span class="t" style="left:1100.2px;top:1740.0px;font-size:20.5px;color:#0a0a0a;letter-spacing:-0.279px;">319</span><span class="t" style="left:1139.9px;top:1740.0px;font-size:20.5px;color:#0a0a0a;letter-spacing:-0.270px;">Radeon</span><span class="t" style="left:1216.4px;top:1740.0px;font-size:20.5px;color:#0a0a0a;letter-spacing:-0.427px;transform:scaleX(0.8734);transform-origin:0 0;">RX</span><span class="t" style="left:1247.0px;top:1740.0px;font-size:20.5px;color:#0a0a0a;letter-spacing:-0.209px;">7800</span><span class="t" style="left:1298.0px;top:1740.0px;font-size:20.5px;color:#0a0a0a;letter-spacing:-0.393px;transform:scaleX(0.8886);transform-origin:0 0;">XT</span><span class="t" style="left:1327.0px;top:1740.0px;font-size:20.5px;color:#0a0a0a;letter-spacing:-0.379px;">Core</span><span class="t" style="left:1376.4px;top:1740.0px;font-size:20.5px;color:#0a0a0a;letter-spacing:0.241px;">Edition</span><span class="t" style="left:1446.5px;top:1740.0px;font-size:20.5px;color:#0a0a0a;letter-spacing:-0.262px;transform:scaleX(0.9452);transform-origin:0 0;">16GB</span><span class="t" style="left:1970.7px;top:1740.0px;font-size:20.5px;color:#0a0a0a;letter-spacing:-0.022px;">Grafikkarten</span><span class="t" style="left:2215.7px;top:1741.0px;font-size:19.8px;color:#0a0a0a;letter-spacing:-0.172px;">761.25</span><span class="t" style="left:2408.0px;top:1741.0px;font-size:19.8px;color:#0a0a0a;letter-spacing:-0.172px;">758.65</span><span class="t" style="left:2636.3px;top:1740.0px;font-size:20.5px;color:#0a0a0a;">3</span><span class="t" style="left:2793.0px;top:1741.0px;font-size:19.67px;color:#0a0a0a;letter-spacing:-0.203px;">Stk</span><div class="a" style="left:2916.1px;top:1733.0px;width:86.6px;height:31.5px;background:#dcfce7;border-radius:10.5px;"></div><div class="a" style="left:2927.6px;top:1747.3px;width:8.7px;height:8.7px;background:#16803c;border-radius:4.4px;"></div><span class="t" style="left:2948.3px;top:1740.0px;font-size:20.24px;color:#15803d;letter-spacing:0.110px;-webkit-text-stroke:0.62px #15803d;">Aktiv</span><div class="a" style="left:3077.0px;top:1725.7px;width:91.1px;height:46.0px;background:#1463ff;border-radius:11.5px;"></div><svg class="a" style="left:3108.2px;top:1737.2px;" width="27" height="27" viewBox="0 0 27 27"><use href="#pencil" width="27" height="27"/></svg><div class="a" style="left:451.2px;top:1987.0px;width:2828.4px;height:53.2px;background:#f8f9fb;border-radius:0 0 24px 24px;"></div><div class="a" style="left:451.2px;top:1986.2px;width:2828.4px;height:1.4px;background:#e9ecf1;"></div><span class="t" style="left:475.5px;top:2006.0px;font-size:19px;color:#64748b;letter-spacing:-0.605px;">21</span><span class="t" style="left:501.6px;top:2006.0px;font-size:19px;color:#64748b;letter-spacing:0.287px;">Artikel</span><span class="t" style="left:561.7px;top:2006.0px;font-size:19px;color:#64748b;letter-spacing:0.316px;">gefunden</span><svg class="a" style="left:2956.2px;top:2004.2px;" width="23" height="21" viewBox="0 0 23 21"><path d="M11.5 2 L21.4 19.4 H1.6 Z" fill="none" stroke="#dc2626" stroke-width="2" stroke-linejoin="round"/><path d="M11.5 8 V13.6 M11.5 15.6 V17.4" stroke="#dc2626" stroke-width="2"/></svg><span class="t" style="left:2985.0px;top:2006.0px;font-size:19.5px;color:#dc2626;-webkit-text-stroke:0.62px #dc2626;">1</span><span class="t" style="left:3001.1px;top:2006.0px;font-size:19.5px;color:#dc2626;letter-spacing:0.275px;-webkit-text-stroke:0.62px #dc2626;">Artikel</span><span class="t" style="left:3062.6px;top:2006.0px;font-size:19.5px;color:#dc2626;letter-spacing:0.389px;-webkit-text-stroke:0.62px #dc2626;">unter</span><span class="t" style="left:3114.4px;top:2006.0px;font-size:19.5px;color:#dc2626;letter-spacing:0.220px;-webkit-text-stroke:0.62px #dc2626;">Mindestbestand</span><div class="a" style="left:3293.6px;top:581.7px;width:507.8px;height:1433.3px;background:#ffffff;border-radius:24px;"></div><span class="t" style="left:3322.0px;top:614.0px;font-size:19.93px;color:#64748b;letter-spacing:0.089px;-webkit-text-stroke:0.62px #64748b;">Artikeldetails</span><span class="t" style="left:3322.0px;top:650.0px;font-size:23.71px;color:#0f172a;font-weight:700;letter-spacing:-0.217px;">Corsair Vengeance LPX 32GB</span><span class="t" style="left:3322.0px;top:681.0px;font-size:24.73px;color:#0f172a;font-weight:700;letter-spacing:-0.203px;">DDR4-3200 CL16 Kit</span><span class="t" style="left:3322.0px;top:717.0px;font-size:18.51px;color:#64748b;letter-spacing:-0.169px;">VEL-RAM-0002</span><div class="a" style="left:3322.0px;top:753.6px;width:451.2px;height:2.0px;background:#e2e8f0;"></div><span class="t" style="left:3322.0px;top:797.0px;font-size:17.21px;color:#94a3b8;letter-spacing:-0.184px;-webkit-text-stroke:0.7px #94a3b8;transform:scaleX(0.9575);transform-origin:0 0;">ALLGEMEIN</span><span class="t" style="left:3322.0px;top:827.0px;font-size:18.14px;color:#64748b;letter-spacing:-0.280px;transform:scaleX(0.9586);transform-origin:0 0;">EAN</span><span class="t" style="left:3322.0px;top:853.0px;font-size:20.5px;color:#0f172a;letter-spacing:0.223px;-webkit-text-stroke:0.6px #0f172a;">0840006660995</span><span class="t" style="left:3322.0px;top:888.0px;font-size:19.09px;color:#64748b;letter-spacing:-0.146px;">Kategorie</span><span class="t" style="left:3322.0px;top:916.0px;font-size:21.02px;color:#0f172a;letter-spacing:0.104px;-webkit-text-stroke:0.6px #0f172a;">Arbeitsspeicher</span><span class="t" style="left:3322.0px;top:951.0px;font-size:18.99px;color:#64748b;letter-spacing:-0.136px;">Lieferant</span><span class="t" style="left:3322.0px;top:979.0px;font-size:20.5px;color:#0f172a;letter-spacing:-0.013px;-webkit-text-stroke:0.6px #0f172a;">Corsair</span><span class="t" style="left:3322.0px;top:1014.0px;font-size:19.5px;color:#64748b;letter-spacing:-0.044px;">Lieferanten-Art.-Nr.</span><span class="t" style="left:3322.0px;top:1041.0px;font-size:20.5px;color:#0f172a;letter-spacing:-0.321px;-webkit-text-stroke:0.6px #0f172a;">CMK32GX4M2E3200C16</span><span class="t" style="left:3321.5px;top:1092.0px;font-size:17.21px;color:#94a3b8;letter-spacing:-0.189px;-webkit-text-stroke:0.7px #94a3b8;transform:scaleX(0.8452);transform-origin:0 0;">PREISE</span><span class="t" style="left:3379.2px;top:1092.0px;font-size:17.21px;color:#94a3b8;-webkit-text-stroke:0.7px #94a3b8;">&amp;</span><span class="t" style="left:3398.3px;top:1092.0px;font-size:17.21px;color:#94a3b8;letter-spacing:-0.200px;-webkit-text-stroke:0.7px #94a3b8;transform:scaleX(0.9519);transform-origin:0 0;">BESTAND</span><span class="t" style="left:3321.5px;top:1121.0px;font-size:19.5px;color:#64748b;letter-spacing:-0.165px;transform:scaleX(0.9392);transform-origin:0 0;">VK-Preis</span><span class="t" style="left:3398.3px;top:1121.0px;font-size:19.5px;color:#64748b;letter-spacing:0.150px;transform:scaleX(1.0495);transform-origin:0 0;">brutto</span><span class="t" style="left:3321.5px;top:1149.0px;font-size:20.5px;color:#0f172a;letter-spacing:-0.087px;-webkit-text-stroke:0.6px #0f172a;">255,73</span><span class="t" style="left:3390.0px;top:1149.0px;font-size:20.5px;color:#0f172a;-webkit-text-stroke:0.6px #0f172a;">€</span><span class="t" style="left:3407.4px;top:1149.0px;font-size:20.5px;color:#0f172a;letter-spacing:0.154px;-webkit-text-stroke:0.6px #0f172a;">(inkl.</span><span class="t" style="left:3457.7px;top:1149.0px;font-size:20.5px;color:#0f172a;letter-spacing:0.051px;-webkit-text-stroke:0.6px #0f172a;">19</span><span class="t" style="left:3486.7px;top:1149.0px;font-size:20.5px;color:#0f172a;-webkit-text-stroke:0.6px #0f172a;">%</span><span class="t" style="left:3510.2px;top:1149.0px;font-size:20.5px;color:#0f172a;letter-spacing:0.108px;-webkit-text-stroke:0.6px #0f172a;">MwSt.)</span><span class="t" style="left:3321.5px;top:1183.0px;font-size:19.5px;color:#64748b;letter-spacing:-0.148px;transform:scaleX(0.9751);transform-origin:0 0;">Verkaufspreis</span><span class="t" style="left:3440.5px;top:1183.0px;font-size:19.5px;color:#64748b;letter-spacing:0.370px;">netto</span><span class="t" style="left:3321.5px;top:1211.0px;font-size:20.5px;color:#0f172a;letter-spacing:-0.249px;-webkit-text-stroke:0.6px #0f172a;">214,90</span><span class="t" style="left:3389.1px;top:1211.0px;font-size:20.5px;color:#0f172a;-webkit-text-stroke:0.6px #0f172a;">€</span><span class="t" style="left:3322.0px;top:1247.0px;font-size:18.14px;color:#64748b;letter-spacing:-0.153px;transform:scaleX(0.9653);transform-origin:0 0;">EK-Preis</span><span class="t" style="left:3321.5px;top:1274.0px;font-size:20.5px;color:#0f172a;letter-spacing:0.173px;-webkit-text-stroke:0.6px #0f172a;">205,40</span><span class="t" style="left:3391.4px;top:1274.0px;font-size:20.5px;color:#0f172a;-webkit-text-stroke:0.6px #0f172a;">€</span><span class="t" style="left:3321.5px;top:1309.0px;font-size:19.5px;color:#64748b;letter-spacing:-0.035px;">Aktueller</span><span class="t" style="left:3402.7px;top:1309.0px;font-size:19.5px;color:#64748b;letter-spacing:-0.179px;transform:scaleX(0.9619);transform-origin:0 0;">Bestand</span><span class="t" style="left:3321.5px;top:1336.0px;font-size:20.5px;color:#0f172a;letter-spacing:-0.787px;-webkit-text-stroke:0.6px #0f172a;">15</span><span class="t" style="left:3349.5px;top:1336.0px;font-size:20.5px;color:#0f172a;letter-spacing:-0.222px;-webkit-text-stroke:0.6px #0f172a;transform:scaleX(0.9596);transform-origin:0 0;">Stk</span><span class="t" style="left:3321.5px;top:1370.0px;font-size:19.5px;color:#64748b;letter-spacing:-0.063px;">Mindestbestand</span><span class="t" style="left:3463.9px;top:1370.0px;font-size:19.5px;color:#64748b;letter-spacing:-0.195px;">(Meldebestand)</span><span class="t" style="left:3321.5px;top:1398.0px;font-size:20.5px;color:#0f172a;-webkit-text-stroke:0.6px #0f172a;">3</span><span class="t" style="left:3339.3px;top:1398.0px;font-size:20.5px;color:#0f172a;letter-spacing:-0.008px;-webkit-text-stroke:0.6px #0f172a;">Stk</span><div class="a" style="left:3321.5px;top:1852.3px;width:451.3px;height:62.1px;background:#1463ff;border-radius:12px;"></div><span class="t" style="left:3478.2px;top:1873.0px;font-size:21.56px;color:#ffffff;letter-spacing:0.112px;-webkit-text-stroke:0.62px #ffffff;">Produktdetails</span><div class="a" style="left:3321.5px;top:1925.5px;width:451.3px;height:62.6px;background:#ea580c;border-radius:12px;"></div><span class="t" style="left:3455.2px;top:1946.0px;font-size:21px;color:#ffffff;letter-spacing:-0.260px;-webkit-text-stroke:0.62px #ffffff;">VK-Preis</span><span class="t" style="left:3542.5px;top:1946.0px;font-size:21px;color:#ffffff;letter-spacing:0.156px;-webkit-text-stroke:0.62px #ffffff;transform:scaleX(1.0216);transform-origin:0 0;">Kalkulator</span><div class="a" style="left:1332.4px;top:479.2px;width:1166.8px;height:1107.1px;border-radius:12px;background:#fff;box-shadow:0 0 0 1.2px #8e8e8e,0 34px 70px 8px rgba(0,0,0,.27),0 3px 36px 2px rgba(0,0,0,.12);overflow:hidden"><div class="a" style="left:0;top:0;width:100%;height:51px;background:#f3f3f3"></div><div class="a" style="left:0;top:50.8px;width:100%;height:110.2px;background:#1a1b2e"></div><div class="a" style="left:0;top:160.1px;width:100%;height:851.1px;background:#eef1f6"></div><div class="a" style="left:0;top:1010.4px;width:100%;height:1.8px;background:#e2e6ec"></div></div><svg class="a" style="left:1345.0px;top:489.0px;" width="28" height="28" viewBox="0 0 28 28"><use href="#vlogo" width="28" height="28"/></svg><span class="t" style="left:1382.5px;top:495.0px;font-size:20.27px;color:#000;letter-spacing:-0.288px;">VK-Preis</span><span class="t" style="left:1466.5px;top:495.0px;font-size:20.27px;color:#000;letter-spacing:0.336px;">Kalkulator</span><div class="a" style="left:2288.5px;top:503.8px;width:15.2px;height:1.3px;background:#111;"></div><svg class="a" style="left:2369.0px;top:496.2px;" width="17" height="17" viewBox="0 0 17 17"><rect x="1" y="1" width="15" height="15" rx="2" fill="none" stroke="#111" stroke-width="1.4"/></svg><svg class="a" style="left:2450.0px;top:496.4px;" width="17" height="17" viewBox="0 0 17 17"><path d="M0.8 0.8 L16.2 16.2 M16.2 0.8 L0.8 16.2" stroke="#111" stroke-width="1.4" fill="none"/></svg><span class="t" style="left:1368.0px;top:559.0px;font-size:27px;color:#ffffff;font-weight:700;letter-spacing:0.178px;">VK-Preis Kalkulator</span><span class="t" style="left:1367.5px;top:599.0px;font-size:18.49px;color:#8b93a8;letter-spacing:-0.126px;">Corsair</span><span class="t" style="left:1431.9px;top:599.0px;font-size:18.49px;color:#8b93a8;letter-spacing:0.118px;">Vengeance</span><span class="t" style="left:1530.9px;top:599.0px;font-size:18.49px;color:#8b93a8;letter-spacing:-0.262px;transform:scaleX(0.8915);transform-origin:0 0;">LPX</span><span class="t" style="left:1567.2px;top:599.0px;font-size:18.49px;color:#8b93a8;letter-spacing:-0.236px;transform:scaleX(0.9585);transform-origin:0 0;">32GB</span><span class="t" style="left:1617.4px;top:599.0px;font-size:18.49px;color:#8b93a8;">DDR4-3200</span><span class="t" style="left:1720.6px;top:599.0px;font-size:18.49px;color:#8b93a8;letter-spacing:-0.221px;transform:scaleX(0.9498);transform-origin:0 0;">CL16</span><span class="t" style="left:1767.5px;top:599.0px;font-size:18.49px;color:#8b93a8;letter-spacing:0.218px;">Kit</span><span class="t" style="left:2325.2px;top:599.0px;font-size:18.61px;color:#666d80;letter-spacing:-0.213px;">Steuersatz:</span><span class="t" style="left:2422.8px;top:599.0px;font-size:18.61px;color:#666d80;letter-spacing:-0.140px;">19</span><span class="t" style="left:2449.0px;top:599.0px;font-size:18.61px;color:#666d80;">%</span><div class="a" style="left:1361.3px;top:668.0px;width:544.0px;height:793.1px;background:#ffffff;border-radius:17px;"></div><div class="a" style="left:1926.4px;top:668.0px;width:545.0px;height:793.1px;background:#ffffff;border-radius:17px;"></div><span class="t" style="left:1389.6px;top:703.0px;font-size:22.5px;color:#0f172a;font-weight:700;letter-spacing:-0.248px;">Neuer Preis</span><span class="t" style="left:1389.1px;top:756.0px;font-size:19.5px;color:#64748b;letter-spacing:-0.165px;transform:scaleX(0.9370);transform-origin:0 0;">VK-Preis</span><span class="t" style="left:1465.7px;top:756.0px;font-size:19.5px;color:#64748b;letter-spacing:0.150px;transform:scaleX(1.0470);transform-origin:0 0;">brutto</span><span class="t" style="left:1524.3px;top:756.0px;font-size:19.5px;color:#64748b;letter-spacing:-0.179px;transform:scaleX(0.9251);transform-origin:0 0;">(€)</span><div class="a" style="left:1389.5px;top:780.4px;width:488.2px;height:62.2px;background:#f8fafc;border:3.2px solid #1761f5;box-sizing:border-box;"></div><span class="t" style="left:1614.9px;top:856.0px;font-size:18px;color:#94a3b8;letter-spacing:0.056px;">oder</span><span class="t" style="left:1389.1px;top:893.0px;font-size:18.86px;color:#64748b;letter-spacing:-0.083px;">Handelsspanne</span><span class="t" style="left:1524.8px;top:893.0px;font-size:18.86px;color:#64748b;letter-spacing:-0.220px;transform:scaleX(0.9416);transform-origin:0 0;">(%)</span><div class="a" style="left:1389.5px;top:917.0px;width:488.2px;height:61.8px;background:#f8fafc;border:3.2px solid #ea580c;box-sizing:border-box;"></div><div class="a" style="left:1389.5px;top:1010.4px;width:488.2px;height:2.0px;background:#e2e8f0;"></div><span class="t" style="left:1389.1px;top:1038.0px;font-size:19.5px;color:#64748b;letter-spacing:-0.165px;transform:scaleX(0.9376);transform-origin:0 0;">VK-Preis</span><span class="t" style="left:1465.7px;top:1038.0px;font-size:19.5px;color:#64748b;letter-spacing:0.163px;transform:scaleX(1.0236);transform-origin:0 0;">netto</span><div class="a" style="left:1389.6px;top:1082.8px;width:12.6px;height:2.8px;background:#1d4ed8;"></div><span class="t" style="left:1389.6px;top:1121.0px;font-size:18.84px;color:#64748b;letter-spacing:-0.155px;">Handelsspanne</span><div class="a" style="left:1389.6px;top:1164.6px;width:12.6px;height:2.8px;background:#15803d;"></div><span class="t" style="left:1389.6px;top:1201.0px;font-size:19.5px;color:#64748b;letter-spacing:-0.131px;">Kalkulationsfaktor</span><div class="a" style="left:1389.6px;top:1245.1px;width:12.6px;height:2.8px;background:#0f172a;"></div><span class="t" style="left:1389.1px;top:1283.0px;font-size:19.5px;color:#64748b;letter-spacing:-0.251px;">Rohertrag</span><span class="t" style="left:1479.4px;top:1283.0px;font-size:19.5px;color:#64748b;letter-spacing:-0.170px;transform:scaleX(0.9638);transform-origin:0 0;">(Gewinn)</span><div class="a" style="left:1389.6px;top:1327.4px;width:12.6px;height:2.8px;background:#15803d;"></div><span class="t" style="left:1954.5px;top:703.0px;font-size:22.5px;color:#0f172a;font-weight:700;letter-spacing:-0.134px;">Aktueller Preis</span><span class="t" style="left:1954.0px;top:756.0px;font-size:19.5px;color:#64748b;letter-spacing:-0.165px;transform:scaleX(0.9414);transform-origin:0 0;">VK-Preis</span><span class="t" style="left:2030.9px;top:756.0px;font-size:19.5px;color:#64748b;letter-spacing:0.150px;transform:scaleX(1.0519);transform-origin:0 0;">brutto</span><span class="t" style="left:1954.0px;top:786.0px;font-size:22.5px;color:#1e293b;letter-spacing:0.011px;-webkit-text-stroke:0.62px #1e293b;">255,73</span><span class="t" style="left:2029.7px;top:786.0px;font-size:22.5px;color:#1e293b;-webkit-text-stroke:0.62px #1e293b;">€</span><span class="t" style="left:1954.0px;top:832.0px;font-size:19.5px;color:#64748b;letter-spacing:-0.165px;transform:scaleX(0.9453);transform-origin:0 0;">VK-Preis</span><span class="t" style="left:2031.3px;top:832.0px;font-size:19.5px;color:#64748b;letter-spacing:0.163px;transform:scaleX(1.0320);transform-origin:0 0;">netto</span><span class="t" style="left:1954.0px;top:863.0px;font-size:22.5px;color:#1e293b;letter-spacing:-0.395px;-webkit-text-stroke:0.62px #1e293b;">214,90</span><span class="t" style="left:2027.5px;top:863.0px;font-size:22.5px;color:#1e293b;-webkit-text-stroke:0.62px #1e293b;">€</span><span class="t" style="left:1954.0px;top:910.0px;font-size:18.79px;color:#64748b;letter-spacing:-0.159px;transform:scaleX(0.9497);transform-origin:0 0;">EK-Preis</span><span class="t" style="left:2028.9px;top:910.0px;font-size:18.79px;color:#64748b;letter-spacing:0.159px;">(angezeigt)</span><span class="t" style="left:1954.0px;top:940.0px;font-size:22.5px;color:#1e293b;letter-spacing:0.074px;-webkit-text-stroke:0.62px #1e293b;">205,40</span><span class="t" style="left:2030.0px;top:940.0px;font-size:22.5px;color:#1e293b;-webkit-text-stroke:0.62px #1e293b;">€</span><span class="t" style="left:1954.5px;top:987.0px;font-size:18.84px;color:#64748b;letter-spacing:-0.155px;">Handelsspanne</span><span class="t" style="left:1954.0px;top:1017.0px;font-size:22.5px;color:#1e293b;letter-spacing:-0.010px;-webkit-text-stroke:0.62px #1e293b;">4,42</span><span class="t" style="left:2004.6px;top:1017.0px;font-size:22.5px;color:#1e293b;-webkit-text-stroke:0.62px #1e293b;">%</span><span class="t" style="left:1954.5px;top:1063.0px;font-size:19.5px;color:#64748b;letter-spacing:-0.131px;">Kalkulationsfaktor</span><span class="t" style="left:1954.5px;top:1094.0px;font-size:21.17px;color:#1e293b;letter-spacing:-0.188px;-webkit-text-stroke:0.62px #1e293b;">1,245</span><span class="t" style="left:1954.0px;top:1140.0px;font-size:19.5px;color:#64748b;letter-spacing:-0.251px;">Rohertrag</span><span class="t" style="left:2044.3px;top:1140.0px;font-size:19.5px;color:#64748b;letter-spacing:-0.170px;transform:scaleX(0.9638);transform-origin:0 0;">(Gewinn)</span><span class="t" style="left:1954.0px;top:1170.0px;font-size:22.5px;color:#1e293b;letter-spacing:0.036px;-webkit-text-stroke:0.62px #1e293b;">9,50</span><span class="t" style="left:2004.8px;top:1170.0px;font-size:22.5px;color:#1e293b;-webkit-text-stroke:0.62px #1e293b;">€</span><span class="t" style="left:1954.0px;top:1250.0px;font-size:19.5px;color:#64748b;letter-spacing:-0.009px;">Aktueller</span><span class="t" style="left:2035.4px;top:1250.0px;font-size:19.5px;color:#64748b;letter-spacing:-0.179px;transform:scaleX(0.9645);transform-origin:0 0;">Bestand</span><span class="t" style="left:1954.0px;top:1281.0px;font-size:21.95px;color:#1e293b;letter-spacing:-0.398px;-webkit-text-stroke:0.62px #1e293b;">15</span><span class="t" style="left:1984.5px;top:1281.0px;font-size:21.95px;color:#1e293b;letter-spacing:-0.238px;-webkit-text-stroke:0.62px #1e293b;transform:scaleX(0.9772);transform-origin:0 0;">Stk</span><div class="a" style="left:1954.5px;top:1221.9px;width:488.2px;height:2.0px;background:#e2e8f0;"></div><div class="a" style="left:2296.1px;top:1509.3px;width:174.5px;height:58.7px;background:#475569;border-radius:12px;"></div><span class="t" style="left:2337.9px;top:1528.0px;font-size:21px;color:#ffffff;letter-spacing:-0.311px;-webkit-text-stroke:0.62px #ffffff;">Schließen</span><svg class="a" style="left:2481.0px;top:1568.0px;" width="16" height="16" viewBox="0 0 16 16"><rect x="13.0" y="13.0" width="1.6" height="1.6" fill="#b8bcc4"/><rect x="9.4" y="13.0" width="1.6" height="1.6" fill="#b8bcc4"/><rect x="5.8" y="13.0" width="1.6" height="1.6" fill="#b8bcc4"/><rect x="2.2" y="13.0" width="1.6" height="1.6" fill="#b8bcc4"/><rect x="13.0" y="9.4" width="1.6" height="1.6" fill="#b8bcc4"/><rect x="9.4" y="9.4" width="1.6" height="1.6" fill="#b8bcc4"/><rect x="5.8" y="9.4" width="1.6" height="1.6" fill="#b8bcc4"/><rect x="13.0" y="5.8" width="1.6" height="1.6" fill="#b8bcc4"/><rect x="9.4" y="5.8" width="1.6" height="1.6" fill="#b8bcc4"/><rect x="13.0" y="2.2" width="1.6" height="1.6" fill="#b8bcc4"/></svg><svg class="a" style="left:1676.2px;top:0.0px;" width="478" height="38.4" viewBox="0 0 478 38.4"><rect x="0" y="0" width="478" height="38.4" fill="#1f1f1f"/><path d="M1 38.4 V1 H477 V38.4" fill="none" stroke="#5c5c5c" stroke-width="2"/><rect x="0" y="36.6" width="478" height="1.8" fill="#4a4a4a"/><rect x="8.0" y="4.4" width="1.5" height="1.5" fill="#5a5a5a"/><rect x="12.6" y="4.4" width="1.5" height="1.5" fill="#5a5a5a"/><rect x="10.3" y="8.3" width="1.5" height="1.5" fill="#5a5a5a"/><rect x="14.9" y="8.3" width="1.5" height="1.5" fill="#5a5a5a"/><rect x="8.0" y="12.2" width="1.5" height="1.5" fill="#5a5a5a"/><rect x="12.6" y="12.2" width="1.5" height="1.5" fill="#5a5a5a"/><rect x="10.3" y="16.1" width="1.5" height="1.5" fill="#5a5a5a"/><rect x="14.9" y="16.1" width="1.5" height="1.5" fill="#5a5a5a"/><rect x="8.0" y="20.0" width="1.5" height="1.5" fill="#5a5a5a"/><rect x="12.6" y="20.0" width="1.5" height="1.5" fill="#5a5a5a"/><rect x="10.3" y="23.9" width="1.5" height="1.5" fill="#5a5a5a"/><rect x="14.9" y="23.9" width="1.5" height="1.5" fill="#5a5a5a"/><rect x="8.0" y="27.8" width="1.5" height="1.5" fill="#5a5a5a"/><rect x="12.6" y="27.8" width="1.5" height="1.5" fill="#5a5a5a"/><rect x="10.3" y="31.7" width="1.5" height="1.5" fill="#5a5a5a"/><rect x="14.9" y="31.7" width="1.5" height="1.5" fill="#5a5a5a"/><g fill="none" stroke="#d6d6d6" stroke-width="1.8"><path d="M30 6.6 H46.8 V12 M30 6.6 V32.6 H40"/><path d="M30 8.6 H46.8" stroke-width="4"/><path d="M33.4 15.4 H40 M33.4 20.6 H36.6 M33.4 25.8 H36.6" stroke-width="1.6"/><circle cx="47.4" cy="24.2" r="6.4"/><path d="M47.4 14.6 V20.4 M47.4 28 V33.8 M37.8 24.2 H43.6 M51.2 24.2 H57"/></g><g fill="none" stroke="#d6d6d6" stroke-width="1.9"><rect x="75.6" y="12" width="19.6" height="15.8" rx="1.2"/><path d="M95.2 18 L102.4 13.4 V26.4 L95.2 21.8"/></g><rect x="118.4" y="7" width="1.3" height="24.6" fill="#4d4d4d"/><g fill="none" stroke="#d6d6d6" stroke-width="1.8"><path d="M134.6 23.2 H131 V7 H157.4 V23.2 H150"/></g><path d="M136.6 12.2 L137.6 33.6 L142.4 28 L151.4 28 Z" fill="#d6d6d6"/><g fill="none" stroke="#d6d6d6" stroke-width="1.9"><rect x="177" y="7" width="26.4" height="26.4"/><rect x="184" y="14" width="12.4" height="12.4"/></g><g fill="none" stroke="#d6d6d6" stroke-width="1.7"><path d="M223 11.6 V7 H228.6 M244.6 7 H250 V11.6 M250 20 V24.4 H246 M223 19.6 V24.4 H226.4"/><rect x="227.4" y="10.8" width="18.2" height="10.4" stroke-width="1.5"/></g><path d="M230.2 15 L231.2 33.4 L235.6 28.6 L243.6 28.6 Z" fill="#d6d6d6"/><rect x="264.4" y="7" width="1.3" height="24.6" fill="#4d4d4d"/><g fill="none" stroke="#fff" stroke-width="2.2" stroke-linecap="round"><path d="M283.4 9.4 Q279.6 9.4 279.6 13 V16.8 Q279.6 19.8 276.8 19.8 Q279.6 19.8 279.6 22.8 V26.6 Q279.6 30.2 283.4 30.2"/><path d="M296.6 9.4 Q300.4 9.4 300.4 13 V16.8 Q300.4 19.8 303.2 19.8 Q300.4 19.8 300.4 22.8 V26.6 Q300.4 30.2 296.6 30.2"/></g><circle cx="290" cy="20" r="7.4" fill="#e51400" stroke="#fff" stroke-width="1.4"/><path d="M287.2 17.2 L292.8 22.8 M292.8 17.2 L287.2 22.8" stroke="#fff" stroke-width="2.2"/><text x="306.4" y="27.6" font-family="Liberation Sans" font-size="21.5" fill="#f0f0f0" textLength="21" lengthAdjust="spacingAndGlyphs">12</text><g fill="none" stroke="#d6d6d6" stroke-width="1.7"><circle cx="359.2" cy="19.6" r="12.4"/><path d="M351.8 16.6 H366.6 M359.2 16.8 V22 M359.2 22 L355.4 28 M359.2 22 L363 28" stroke-width="1.6"/></g><circle cx="359.2" cy="12.6" r="2.1" fill="#d6d6d6"/><rect x="385.4" y="7" width="1.3" height="24.6" fill="#4d4d4d"/><circle cx="412" cy="20" r="12.4" fill="#f3f3f3" stroke="#e51400" stroke-width="3"/><rect x="403.6" y="17.8" width="16.8" height="4.2" fill="#e51400"/><rect x="437.4" y="7" width="1.3" height="24.6" fill="#4d4d4d"/><path d="M465.4 13.4 L457.6 19.8 L465.4 26.2" fill="none" stroke="#6c6c6c" stroke-width="1.8"/></svg><svg class="a" style="left:1676.2px;top:478.6px;" width="478" height="38.4" viewBox="0 0 478 38.4"><rect x="0" y="0" width="478" height="38.4" fill="#1f1f1f"/><path d="M1 38.4 V1 H477 V38.4" fill="none" stroke="#5c5c5c" stroke-width="2"/><rect x="0" y="36.6" width="478" height="1.8" fill="#4a4a4a"/><rect x="8.0" y="4.4" width="1.5" height="1.5" fill="#5a5a5a"/><rect x="12.6" y="4.4" width="1.5" height="1.5" fill="#5a5a5a"/><rect x="10.3" y="8.3" width="1.5" height="1.5" fill="#5a5a5a"/><rect x="14.9" y="8.3" width="1.5" height="1.5" fill="#5a5a5a"/><rect x="8.0" y="12.2" width="1.5" height="1.5" fill="#5a5a5a"/><rect x="12.6" y="12.2" width="1.5" height="1.5" fill="#5a5a5a"/><rect x="10.3" y="16.1" width="1.5" height="1.5" fill="#5a5a5a"/><rect x="14.9" y="16.1" width="1.5" height="1.5" fill="#5a5a5a"/><rect x="8.0" y="20.0" width="1.5" height="1.5" fill="#5a5a5a"/><rect x="12.6" y="20.0" width="1.5" height="1.5" fill="#5a5a5a"/><rect x="10.3" y="23.9" width="1.5" height="1.5" fill="#5a5a5a"/><rect x="14.9" y="23.9" width="1.5" height="1.5" fill="#5a5a5a"/><rect x="8.0" y="27.8" width="1.5" height="1.5" fill="#5a5a5a"/><rect x="12.6" y="27.8" width="1.5" height="1.5" fill="#5a5a5a"/><rect x="10.3" y="31.7" width="1.5" height="1.5" fill="#5a5a5a"/><rect x="14.9" y="31.7" width="1.5" height="1.5" fill="#5a5a5a"/><g fill="none" stroke="#d6d6d6" stroke-width="1.8"><path d="M30 6.6 H46.8 V12 M30 6.6 V32.6 H40"/><path d="M30 8.6 H46.8" stroke-width="4"/><path d="M33.4 15.4 H40 M33.4 20.6 H36.6 M33.4 25.8 H36.6" stroke-width="1.6"/><circle cx="47.4" cy="24.2" r="6.4"/><path d="M47.4 14.6 V20.4 M47.4 28 V33.8 M37.8 24.2 H43.6 M51.2 24.2 H57"/></g><g fill="none" stroke="#d6d6d6" stroke-width="1.9"><rect x="75.6" y="12" width="19.6" height="15.8" rx="1.2"/><path d="M95.2 18 L102.4 13.4 V26.4 L95.2 21.8"/></g><rect x="118.4" y="7" width="1.3" height="24.6" fill="#4d4d4d"/><g fill="none" stroke="#d6d6d6" stroke-width="1.8"><path d="M134.6 23.2 H131 V7 H157.4 V23.2 H150"/></g><path d="M136.6 12.2 L137.6 33.6 L142.4 28 L151.4 28 Z" fill="#d6d6d6"/><g fill="none" stroke="#d6d6d6" stroke-width="1.9"><rect x="177" y="7" width="26.4" height="26.4"/><rect x="184" y="14" width="12.4" height="12.4"/></g><g fill="none" stroke="#d6d6d6" stroke-width="1.7"><path d="M223 11.6 V7 H228.6 M244.6 7 H250 V11.6 M250 20 V24.4 H246 M223 19.6 V24.4 H226.4"/><rect x="227.4" y="10.8" width="18.2" height="10.4" stroke-width="1.5"/></g><path d="M230.2 15 L231.2 33.4 L235.6 28.6 L243.6 28.6 Z" fill="#d6d6d6"/><rect x="264.4" y="7" width="1.3" height="24.6" fill="#4d4d4d"/><g fill="none" stroke="#fff" stroke-width="2.2" stroke-linecap="round"><path d="M283.4 9.4 Q279.6 9.4 279.6 13 V16.8 Q279.6 19.8 276.8 19.8 Q279.6 19.8 279.6 22.8 V26.6 Q279.6 30.2 283.4 30.2"/><path d="M296.6 9.4 Q300.4 9.4 300.4 13 V16.8 Q300.4 19.8 303.2 19.8 Q300.4 19.8 300.4 22.8 V26.6 Q300.4 30.2 296.6 30.2"/></g><circle cx="290" cy="20" r="7.4" fill="#e51400" stroke="#fff" stroke-width="1.4"/><path d="M287.2 17.2 L292.8 22.8 M292.8 17.2 L287.2 22.8" stroke="#fff" stroke-width="2.2"/><text x="306.4" y="27.6" font-family="Liberation Sans" font-size="21.5" fill="#f0f0f0" textLength="21" lengthAdjust="spacingAndGlyphs">12</text><g fill="none" stroke="#d6d6d6" stroke-width="1.7"><circle cx="359.2" cy="19.6" r="12.4"/><path d="M351.8 16.6 H366.6 M359.2 16.8 V22 M359.2 22 L355.4 28 M359.2 22 L363 28" stroke-width="1.6"/></g><circle cx="359.2" cy="12.6" r="2.1" fill="#d6d6d6"/><rect x="385.4" y="7" width="1.3" height="24.6" fill="#4d4d4d"/><circle cx="412" cy="20" r="12.4" fill="#f3f3f3" stroke="#e51400" stroke-width="3"/><rect x="403.6" y="17.8" width="16.8" height="4.2" fill="#e51400"/><rect x="437.4" y="7" width="1.3" height="24.6" fill="#4d4d4d"/><path d="M465.4 13.4 L457.6 19.8 L465.4 26.2" fill="none" stroke="#6c6c6c" stroke-width="1.8"/></svg></body></html>
